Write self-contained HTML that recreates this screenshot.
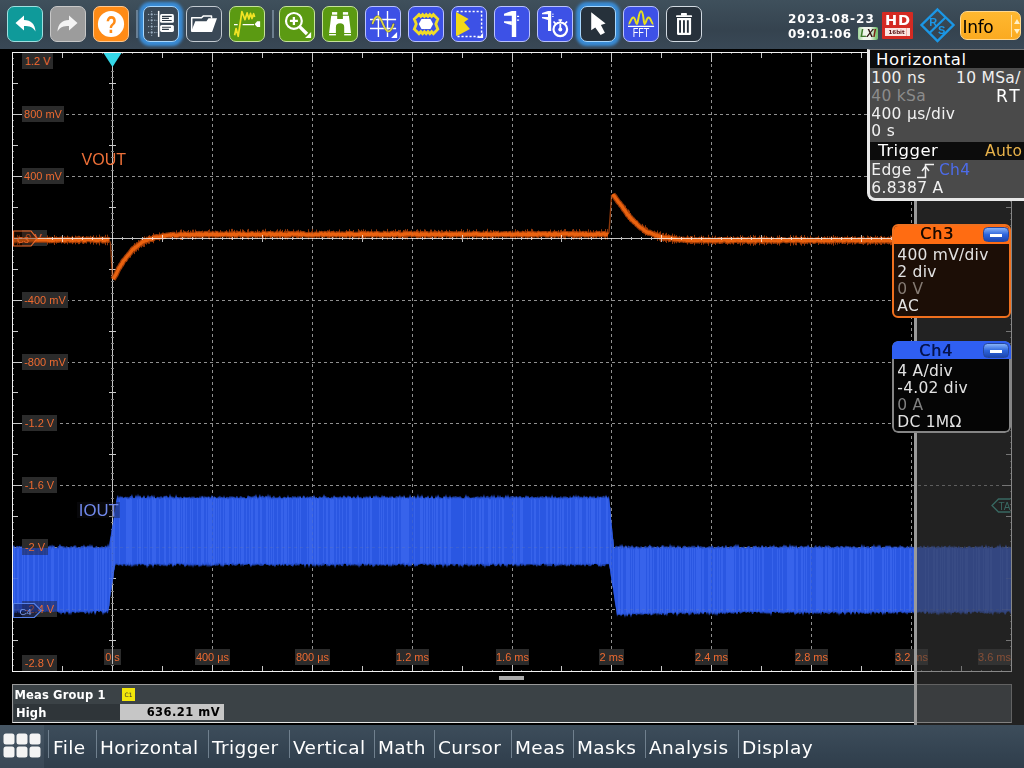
<!DOCTYPE html>
<html lang="en"><head><meta charset="utf-8"><title>RTO Oscilloscope</title>
<style>
*{margin:0;padding:0;box-sizing:border-box}
html,body{width:1024px;height:768px;overflow:hidden;background:#000}
body{position:relative;font-family:"DejaVu Sans","Liberation Sans",sans-serif;color:#fff}
.abs{position:absolute}
#toolbar{position:absolute;left:0;top:0;width:1024px;height:49px;background:linear-gradient(#3f505c,#35434f 62%,#394856)}
.tb{position:absolute;top:6px;width:36px;height:36px;border-radius:7px;border:1px solid #d2dae2;overflow:hidden}
.tb svg{position:absolute;left:-1px;top:-1px;width:36px;height:36px}
.teal{background:#0f9a9a;border-color:#9fe0e0}
.gray{background:#9c9c9c;border-color:#c8c8c8}
.orange{background:#ff8b16;border-color:#ffc890}
.dark{background:#3a4856;border-color:#c3cad1}
.green{background:#5b9a12;border-color:#c6e39a}
.blue{background:#3d51e6;border-color:#b9c2ff}
.sel{box-shadow:0 0 3px 4px #3a8cd6;border-color:#a8d8ff}
.tsep{position:absolute;top:10px;width:2px;height:28px;background:#6d7f8f}
#menubar{position:absolute;left:0;top:725px;width:1024px;height:43px;background:linear-gradient(#3d4d5b,#334250 70%,#303e4b)}
#menubar .mi{position:absolute;top:8.500px;font-size:18.5px;line-height:28px;color:#fff;white-space:nowrap;letter-spacing:.4px}
#menubar .ms{position:absolute;top:5px;width:1px;height:28px;background:#70808e}
.lab{position:absolute;height:16px;background:#2b2b2b;color:#ee6a30;font-family:"Liberation Sans",sans-serif;font-size:11px;line-height:16px;text-align:center;white-space:nowrap}

</style></head><body>
<div id="toolbar">
<div class="tb teal" style="left:7px"><svg viewBox="0 0 36 36"><path d="M8.5,17 L17,9.5 V14 C24,14 28,18 28.5,25.5 C26,21 22.5,20 17,20 V24.5 Z" fill="#fff"/></svg></div>
<div class="tb gray" style="left:50px"><svg viewBox="0 0 36 36"><path d="M27.5,17 L19,9.5 V14 C12,14 8,18 7.5,25.5 C10,21 13.5,20 19,20 V24.5 Z" fill="#f4f4f4"/></svg></div>
<div class="tb orange" style="left:93px"><svg viewBox="0 0 36 36"><circle cx="18" cy="18" r="13.1" fill="#fff"/><text transform="translate(18.3,26.8) scale(.74,1)" text-anchor="middle" font-family="Liberation Sans" font-weight="bold" font-size="24.5" fill="#ff8b16">?</text></svg></div>
<div class="tsep" style="left:136px"></div>
<div class="tb dark sel" style="left:143px"><svg viewBox="0 0 36 36"><g fill="#9db0c2"><circle cx="5.6" cy="8.4" r=".7"/><circle cx="8.7" cy="8.4" r="1.15"/><circle cx="11.8" cy="8.4" r=".7"/><circle cx="13.9" cy="8.4" r=".5"/><circle cx="5.6" cy="14.3" r=".7"/><circle cx="8.7" cy="14.3" r="1.15"/><circle cx="11.8" cy="14.3" r=".7"/><circle cx="13.9" cy="14.3" r=".5"/><circle cx="5.6" cy="20.6" r=".7"/><circle cx="8.7" cy="20.6" r="1.15"/><circle cx="11.8" cy="20.6" r=".7"/><circle cx="13.9" cy="20.6" r=".5"/><circle cx="5.6" cy="26.5" r=".7"/><circle cx="8.7" cy="26.5" r="1.15"/><circle cx="11.8" cy="26.5" r=".7"/><circle cx="13.9" cy="26.5" r=".5"/><circle cx="8.7" cy="11.4" r=".6"/><circle cx="8.7" cy="17.4" r=".6"/><circle cx="8.7" cy="23.5" r=".6"/><circle cx="8.7" cy="29.3" r=".6"/><circle cx="8.7" cy="5.6" r=".6"/></g><rect x="14.9" y="4.9" width="1.5" height="26" fill="#fff"/><rect x="17.1" y="8.100" width="13.8" height="8.700" rx="1.6" fill="#fff"/><rect x="17.1" y="19" width="13.8" height="6.900" rx="1.6" fill="#fff"/><path d="M19,10.400 H28.700 M19,12.400 H25.900 M19,14.500 H28.700 M19,21.300 H28 M19,23.400 H25.900" stroke="#2c3844" stroke-width="1.1"/></svg></div>
<div class="tb dark" style="left:186px"><svg viewBox="0 0 36 36"><path d="M5.700,25 V11.700 H15.500 L17.500,9.900 H25.500 V12.500" fill="none" stroke="#fff" stroke-width="1.5" stroke-linejoin="round"/><path d="M5,25.900 L9.300,15.200 H20.500 L22.500,12.300 H31 L26.100,25.900 Z" fill="#fff"/></svg></div>
<div class="tb green" style="left:229px"><svg viewBox="0 0 36 36"><path d="M5,18.600 H8.700 M13.600,18.600 H25" stroke="#fff" stroke-width="1.2"/><path d="M25.600,18.300 L28.100,15.200 H31.100 V20.900 H28.100 Z" fill="#fff"/><path d="M5.600,29.300 L7.100,22.500 L9.200,30.300 L12.900,5.500 L16,13.600 L18.100,6.900 L19.900,13.100 L21.500,7.400 L23,12.600 L24.600,7.700 L25.600,11" stroke="#f1e324" stroke-width="1.7" fill="none" stroke-linejoin="round"/></svg></div>
<div class="tsep" style="left:272px"></div>
<div class="tb green" style="left:279px"><svg viewBox="0 0 36 36"><circle cx="14.900" cy="14.900" r="7.900" fill="none" stroke="#fff" stroke-width="2.2"/><path d="M10.900,14.900 h8 M14.900,10.900 v8" stroke="#fff" stroke-width="2.3"/><path d="M20.600,20.600 L28,28" stroke="#fff" stroke-width="3.4"/><path d="M32.100,32.100 L26.100,31.900 L32.100,25.900 Z" fill="#fff"/></svg></div>
<div class="tb green" style="left:322px"><svg viewBox="0 0 36 36"><rect x="10" y="6.100" width="5.200" height="2.600" fill="#fff"/><rect x="20.900" y="6.100" width="5.200" height="2.600" fill="#fff"/><path d="M9.200,9.700 H15.200 V12.900 H20.900 V9.700 H26.900 L29,26.900 H22.200 V21 Q22.200,17.300 18.050,17.300 Q13.900,17.300 13.900,21 V26.900 H7.100 Z" fill="#fff"/><rect x="7.100" y="28" width="6.800" height="1.400" fill="#fff"/><rect x="22.200" y="28" width="6.800" height="1.400" fill="#fff"/></svg></div>
<div class="tb blue" style="left:365px"><svg viewBox="0 0 36 36"><path d="M13.400,5 V31.100 M22.500,5 V31.100 M5,13.500 H31.100 M5,22.500 H31.100" stroke="#fff" stroke-width="1.4"/><path d="M7.700,17.300 C9.500,12 11,10.500 12.600,10.500 C15,10.500 16.500,14.500 18.100,18.300 C19.800,22.500 21.500,25.400 23.500,25.400 C25.500,25.400 27.300,22 28.500,18.300" stroke="#4a4a20" stroke-width="2.8" fill="none" stroke-linecap="round" opacity=".5"/><path d="M7.700,17.300 C9.500,12 11,10.500 12.600,10.500 C15,10.500 16.500,14.500 18.100,18.300 C19.800,22.500 21.500,25.400 23.500,25.400 C25.500,25.400 27.300,22 28.500,18.300" stroke="#dcd444" stroke-width="1.8" fill="none" stroke-linecap="round"/><path d="M32.100,26.100 V31.900 H26.100 Z" fill="#fff"/></svg></div>
<div class="tb blue" style="left:408px"><svg viewBox="0 0 36 36"><path d="M9.500,10 L11,8.500 L12.800,10.500 L14.600,8.500 L16.400,10.500 L18.200,8.500 L20,10.500 L21.800,8.500 L23.600,10.500 L25.400,8.500 L26.800,10 L29.800,13 L27.800,18.100 L29.800,23.200 L26.800,26.200 L25.400,27.700 L23.600,25.700 L21.800,27.700 L20,25.700 L18.200,27.700 L16.400,25.700 L14.600,27.700 L12.800,25.700 L11,27.700 L9.500,26.200 L6.300,23.200 L8.300,18.100 L6.300,13 Z" fill="none" stroke="#f0dc28" stroke-width="2.800" stroke-linejoin="miter"/><path d="M10.800,18.100 L13.500,13.100 H22.400 L25.100,18.100 L22.400,23 H13.500 Z" fill="#fff"/></svg></div>
<div class="tb blue" style="left:451px"><svg viewBox="0 0 36 36"><path d="M5,6.100 L17.600,13.100 L13.100,16.250 L18.900,23 L6.400,29.800 H5 Z" fill="#f2d818"/><path d="M5.600,5.600 H30.600 V30.600 H5.600" fill="none" stroke="#fff" stroke-width="1.5" stroke-dasharray="2.1 1.9"/><path d="M32.100,26.100 V31.900 H25.100 Q31,31 32.100,26.100 Z" fill="#fff"/></svg></div>
<div class="tb blue" style="left:494px"><svg viewBox="0 0 36 36"><path d="M10,7.700 L17.800,5 H22.200 V31.100 H17.800 V9.700 H10 Z" fill="#fff"/><path d="M10,15.200 H17.800 V19.200 L10,16.800 Z" fill="#fff"/><path d="M23,10.300 h2.100 M23,14.200 h2.100" stroke="#fff" stroke-width="1.2"/></svg></div>
<div class="tb blue" style="left:537px"><svg viewBox="0 0 36 36"><path d="M5,6.900 L11,5 H14.200 V25.100 H11 V8.200 H5 Z" fill="#fff"/><path d="M5,11 H11 V13.900 L5,12.200 Z" fill="#fff"/><path d="M15.200,8.200 h1.400 M15.200,10.500 h1.400" stroke="#fff" stroke-width="1"/><circle cx="23.300" cy="23.300" r="6.800" fill="none" stroke="#fff" stroke-width="2.200"/><path d="M23.300,18.100 V23" stroke="#fff" stroke-width="1.800"/><circle cx="23.300" cy="23.600" r="2" fill="#fff"/><path d="M21.500,13.900 h3.600 M23.300,13.900 v2.500" stroke="#fff" stroke-width="1.500"/><path d="M16.500,15.500 l2.300,2.300 M30.100,15.500 l-2.300,2.300" stroke="#fff" stroke-width="1.700"/></svg></div>
<div class="tb sel" style="left:580px;background:#26313b"><svg viewBox="0 0 36 36"><path d="M11.200,6.200 V24.300 L15.250,21.500 L20.600,29 L24.900,26.800 L20.900,19 L25.600,17.400 Z" fill="#fff"/></svg></div>
<div class="tb blue" style="left:623px"><svg viewBox="0 0 36 36"><path d="M5.600,18.100 C7,18.100 8,11.600 10.300,11.600 C12.500,11.600 12.800,18.100 13.900,18.100 C15.200,18.100 15.500,5.300 18.100,5.300 C20.700,5.300 20.500,18.100 21.700,18.100 C23,18.100 23.300,11.600 25.600,11.600 C27.800,11.600 28.800,18.100 30.300,18.100" stroke="#e8e020" stroke-width="2" fill="none"/><path d="M5,20.400 H31.100" stroke="#fff" stroke-width="1.3"/><text x="9.700" y="30.800" font-family="Liberation Sans" font-size="12" fill="#fff" textLength="16.700" lengthAdjust="spacingAndGlyphs">FFT</text></svg></div>
<div class="tb" style="left:666px;background:#27313b"><svg viewBox="0 0 36 36"><rect x="15" y="7.100" width="5.900" height="2.600" rx=".6" fill="#fff"/><rect x="10" y="9.200" width="16.100" height="1.900" rx=".9" fill="#fff"/><path d="M11,12.100 H25.100 V27.500 Q25.100,29 23.600,29 H12.500 Q11,29 11,27.500 Z" fill="#fff"/><path d="M14.050,14.200 V26.700 M17.950,14.200 V26.700 M21.850,14.200 V26.700" stroke="#27313b" stroke-width="1.900"/></svg></div>
<div class="abs" style="left:788px;top:11.500px;font-size:12px;font-weight:bold;line-height:15px;letter-spacing:1px;color:#fff;white-space:nowrap">2023-08-23</div>
<div class="abs" style="left:788px;top:27px;font-size:12px;font-weight:bold;line-height:15px;letter-spacing:.5px;color:#fff;white-space:nowrap">09:01:06</div>
<div class="abs" style="left:858px;top:27px;width:20px;height:13px;background:linear-gradient(90deg,#9ed49a,#eef6ea 28%,#f2f4ee 62%,#7cc474 92%);border-radius:2px;overflow:hidden;font-family:'Liberation Sans',sans-serif;font-size:10.500px;font-style:italic;font-weight:bold;line-height:13px;text-align:center;letter-spacing:-.3px"><span style="color:#3e7a2a">L</span><span style="color:#2a1410">X</span><span style="color:#7a2414">I</span></div>
<div class="abs" style="left:882px;top:12px;width:31px;height:27px;background:#d42a22;border-radius:1px"><div class="abs" style="left:0;top:.800px;width:31px;text-align:center;font-weight:bold;font-size:14.500px;line-height:15px;color:#fff;letter-spacing:.8px;text-indent:.8px">HD</div><div class="abs" style="left:3px;top:15.700px;width:25px;height:8px;background:#fbe6e2;font-size:5.500px;line-height:8px;color:#5a1010;font-weight:bold;text-align:left;padding-left:3.500px;letter-spacing:0">16bit</div><div class="abs" style="left:24px;top:15.700px;width:1px;height:8px;background:#f0b0a8"></div></div>
<svg class="abs" style="left:919px;top:7px" width="37" height="37" viewBox="0 0 37 37"><path d="M18.500,2.500 L34.500,18 L18.500,34 L2.500,18 Z" fill="none" stroke="#1b97e6" stroke-width="2.400"/><path d="M26.500,10.500 L10.500,26" stroke="#1b97e6" stroke-width="2.200" fill="none"/><text x="14.300" y="18.600" font-family="Liberation Sans" font-weight="bold" font-size="11" fill="#1b97e6" text-anchor="middle">R</text><text x="22.600" y="27" font-family="Liberation Sans" font-weight="bold" font-size="11" fill="#1b97e6" text-anchor="middle">S</text></svg>
<div class="abs" style="left:960px;top:11px;width:61px;height:29px;border-radius:7px;background:linear-gradient(#ffb830,#fbaa20);border:1px solid #ffd890"><div class="abs" style="left:1.500px;top:.800px;font-size:17px;line-height:28px;color:#000;letter-spacing:-.3px">Info</div><div class="abs" style="left:50px;top:3px;width:1px;height:22px;background:#ffe0a0"></div><svg class="abs" style="left:52px;top:6px" width="8" height="17" viewBox="0 0 8 17"><path d="M4,1 L7,6 H1 Z M4,16 L7,11 H1 Z" fill="#fff0c8"/></svg></div>
</div>


<svg class="abs" style="left:0;top:0" width="1024" height="768" viewBox="0 0 1024 768">
<defs><pattern id="st" width="2.3" height="8" patternUnits="userSpaceOnUse"><rect x="0" y="0" width="1" height="8" fill="#4f7cff"/></pattern></defs>
<g opacity="1" shape-rendering="crispEdges" fill="none"><path d="M212.5,52 V671 M312.5,52 V671 M412.5,52 V671 M512.5,52 V671 M611.5,52 V671 M711.5,52 V671 M811.5,52 V671 M911.5,52 V671 M12,114.5 H1011 M12,176.5 H1011 M12,300.5 H1011 M12,362.5 H1011 M12,423.5 H1011 M12,485.5 H1011 M12,547.5 H1011 M12,609.5 H1011" stroke="#909090" stroke-width="1" stroke-dasharray="3 3"/><path d="M112.5,53 V671" stroke="#c6c6c6" stroke-width="1"/><path d="M109,83.5 h7 M13,83.5 h5 M1006,83.5 h5 M13,114.5 h9 M1002,114.5 h9 M109,145.5 h7 M13,145.5 h5 M1006,145.5 h5 M13,176.5 h9 M1002,176.5 h9 M109,207.5 h7 M13,207.5 h5 M1006,207.5 h5 M13,238.5 h9 M1002,238.5 h9 M109,269.5 h7 M13,269.5 h5 M1006,269.5 h5 M13,300.5 h9 M1002,300.5 h9 M109,331.5 h7 M13,331.5 h5 M1006,331.5 h5 M13,362.5 h9 M1002,362.5 h9 M109,392.5 h7 M13,392.5 h5 M1006,392.5 h5 M13,423.5 h9 M1002,423.5 h9 M109,454.5 h7 M13,454.5 h5 M1006,454.5 h5 M13,485.5 h9 M1002,485.5 h9 M109,516.5 h7 M13,516.5 h5 M1006,516.5 h5 M13,547.5 h9 M1002,547.5 h9 M109,578.5 h7 M13,578.5 h5 M1006,578.5 h5 M13,609.5 h9 M1002,609.5 h9 M109,640.5 h7 M13,640.5 h5 M1006,640.5 h5 M62.5,666 v5 M62.5,53 v5 M112.5,53 v9 M112.5,662 v9 M162.5,666 v5 M162.5,53 v5 M212.5,53 v9 M212.5,662 v9 M262.5,666 v5 M262.5,53 v5 M312.5,53 v9 M312.5,662 v9 M362.5,666 v5 M362.5,53 v5 M412.5,53 v9 M412.5,662 v9 M462.5,666 v5 M462.5,53 v5 M512.5,53 v9 M512.5,662 v9 M561.5,666 v5 M561.5,53 v5 M611.5,53 v9 M611.5,662 v9 M661.5,666 v5 M661.5,53 v5 M711.5,53 v9 M711.5,662 v9 M761.5,666 v5 M761.5,53 v5 M811.5,53 v9 M811.5,662 v9 M861.5,666 v5 M861.5,53 v5 M911.5,53 v9 M911.5,662 v9 M961.5,666 v5 M961.5,53 v5" stroke="#c8c8c8" stroke-width="1"/><path d="M111,58.5 h3 M13,58.5 h1 M1010,58.5 h1 M111,64.5 h3 M13,64.5 h1 M1010,64.5 h1 M111,71.5 h3 M13,71.5 h1 M1010,71.5 h1 M111,77.5 h3 M13,77.5 h1 M1010,77.5 h1 M111,89.5 h3 M13,89.5 h1 M1010,89.5 h1 M111,95.5 h3 M13,95.5 h1 M1010,95.5 h1 M111,102.5 h3 M13,102.5 h1 M1010,102.5 h1 M111,108.5 h3 M13,108.5 h1 M1010,108.5 h1 M111,120.5 h3 M13,120.5 h1 M1010,120.5 h1 M111,126.5 h3 M13,126.5 h1 M1010,126.5 h1 M111,132.5 h3 M13,132.5 h1 M1010,132.5 h1 M111,139.5 h3 M13,139.5 h1 M1010,139.5 h1 M111,151.5 h3 M13,151.5 h1 M1010,151.5 h1 M111,157.5 h3 M13,157.5 h1 M1010,157.5 h1 M111,163.5 h3 M13,163.5 h1 M1010,163.5 h1 M111,170.5 h3 M13,170.5 h1 M1010,170.5 h1 M111,182.5 h3 M13,182.5 h1 M1010,182.5 h1 M111,188.5 h3 M13,188.5 h1 M1010,188.5 h1 M111,194.5 h3 M13,194.5 h1 M1010,194.5 h1 M111,201.5 h3 M13,201.5 h1 M1010,201.5 h1 M111,213.5 h3 M13,213.5 h1 M1010,213.5 h1 M111,219.5 h3 M13,219.5 h1 M1010,219.5 h1 M111,225.5 h3 M13,225.5 h1 M1010,225.5 h1 M111,232.5 h3 M13,232.5 h1 M1010,232.5 h1 M111,244.5 h3 M13,244.5 h1 M1010,244.5 h1 M111,250.5 h3 M13,250.5 h1 M1010,250.5 h1 M111,256.5 h3 M13,256.5 h1 M1010,256.5 h1 M111,262.5 h3 M13,262.5 h1 M1010,262.5 h1 M111,275.5 h3 M13,275.5 h1 M1010,275.5 h1 M111,281.5 h3 M13,281.5 h1 M1010,281.5 h1 M111,287.5 h3 M13,287.5 h1 M1010,287.5 h1 M111,293.5 h3 M13,293.5 h1 M1010,293.5 h1 M111,306.5 h3 M13,306.5 h1 M1010,306.5 h1 M111,312.5 h3 M13,312.5 h1 M1010,312.5 h1 M111,318.5 h3 M13,318.5 h1 M1010,318.5 h1 M111,324.5 h3 M13,324.5 h1 M1010,324.5 h1 M111,337.5 h3 M13,337.5 h1 M1010,337.5 h1 M111,343.5 h3 M13,343.5 h1 M1010,343.5 h1 M111,349.5 h3 M13,349.5 h1 M1010,349.5 h1 M111,355.5 h3 M13,355.5 h1 M1010,355.5 h1 M111,368.5 h3 M13,368.5 h1 M1010,368.5 h1 M111,374.5 h3 M13,374.5 h1 M1010,374.5 h1 M111,380.5 h3 M13,380.5 h1 M1010,380.5 h1 M111,386.5 h3 M13,386.5 h1 M1010,386.5 h1 M111,399.5 h3 M13,399.5 h1 M1010,399.5 h1 M111,405.5 h3 M13,405.5 h1 M1010,405.5 h1 M111,411.5 h3 M13,411.5 h1 M1010,411.5 h1 M111,417.5 h3 M13,417.5 h1 M1010,417.5 h1 M111,430.5 h3 M13,430.5 h1 M1010,430.5 h1 M111,436.5 h3 M13,436.5 h1 M1010,436.5 h1 M111,442.5 h3 M13,442.5 h1 M1010,442.5 h1 M111,448.5 h3 M13,448.5 h1 M1010,448.5 h1 M111,461.5 h3 M13,461.5 h1 M1010,461.5 h1 M111,467.5 h3 M13,467.5 h1 M1010,467.5 h1 M111,473.5 h3 M13,473.5 h1 M1010,473.5 h1 M111,479.5 h3 M13,479.5 h1 M1010,479.5 h1 M111,491.5 h3 M13,491.5 h1 M1010,491.5 h1 M111,498.5 h3 M13,498.5 h1 M1010,498.5 h1 M111,504.5 h3 M13,504.5 h1 M1010,504.5 h1 M111,510.5 h3 M13,510.5 h1 M1010,510.5 h1 M111,522.5 h3 M13,522.5 h1 M1010,522.5 h1 M111,529.5 h3 M13,529.5 h1 M1010,529.5 h1 M111,535.5 h3 M13,535.5 h1 M1010,535.5 h1 M111,541.5 h3 M13,541.5 h1 M1010,541.5 h1 M111,553.5 h3 M13,553.5 h1 M1010,553.5 h1 M111,560.5 h3 M13,560.5 h1 M1010,560.5 h1 M111,566.5 h3 M13,566.5 h1 M1010,566.5 h1 M111,572.5 h3 M13,572.5 h1 M1010,572.5 h1 M111,584.5 h3 M13,584.5 h1 M1010,584.5 h1 M111,591.5 h3 M13,591.5 h1 M1010,591.5 h1 M111,597.5 h3 M13,597.5 h1 M1010,597.5 h1 M111,603.5 h3 M13,603.5 h1 M1010,603.5 h1 M111,615.5 h3 M13,615.5 h1 M1010,615.5 h1 M111,621.5 h3 M13,621.5 h1 M1010,621.5 h1 M111,628.5 h3 M13,628.5 h1 M1010,628.5 h1 M111,634.5 h3 M13,634.5 h1 M1010,634.5 h1 M111,646.5 h3 M13,646.5 h1 M1010,646.5 h1 M111,652.5 h3 M13,652.5 h1 M1010,652.5 h1 M111,659.5 h3 M13,659.5 h1 M1010,659.5 h1 M111,665.5 h3 M13,665.5 h1 M1010,665.5 h1 M22.5,670 v1 M22.5,53 v1 M32.5,670 v1 M32.5,53 v1 M42.5,670 v1 M42.5,53 v1 M52.5,670 v1 M52.5,53 v1 M72.5,670 v1 M72.5,53 v1 M82.5,670 v1 M82.5,53 v1 M92.5,670 v1 M92.5,53 v1 M102.5,670 v1 M102.5,53 v1 M122.5,670 v1 M122.5,53 v1 M132.5,670 v1 M132.5,53 v1 M142.5,670 v1 M142.5,53 v1 M152.5,670 v1 M152.5,53 v1 M172.5,670 v1 M172.5,53 v1 M182.5,670 v1 M182.5,53 v1 M192.5,670 v1 M192.5,53 v1 M202.5,670 v1 M202.5,53 v1 M222.5,670 v1 M222.5,53 v1 M232.5,670 v1 M232.5,53 v1 M242.5,670 v1 M242.5,53 v1 M252.5,670 v1 M252.5,53 v1 M272.5,670 v1 M272.5,53 v1 M282.5,670 v1 M282.5,53 v1 M292.5,670 v1 M292.5,53 v1 M302.5,670 v1 M302.5,53 v1 M322.5,670 v1 M322.5,53 v1 M332.5,670 v1 M332.5,53 v1 M342.5,670 v1 M342.5,53 v1 M352.5,670 v1 M352.5,53 v1 M372.5,670 v1 M372.5,53 v1 M382.5,670 v1 M382.5,53 v1 M392.5,670 v1 M392.5,53 v1 M402.5,670 v1 M402.5,53 v1 M422.5,670 v1 M422.5,53 v1 M432.5,670 v1 M432.5,53 v1 M442.5,670 v1 M442.5,53 v1 M452.5,670 v1 M452.5,53 v1 M472.5,670 v1 M472.5,53 v1 M482.5,670 v1 M482.5,53 v1 M492.5,670 v1 M492.5,53 v1 M502.5,670 v1 M502.5,53 v1 M521.5,670 v1 M521.5,53 v1 M531.5,670 v1 M531.5,53 v1 M541.5,670 v1 M541.5,53 v1 M551.5,670 v1 M551.5,53 v1 M571.5,670 v1 M571.5,53 v1 M581.5,670 v1 M581.5,53 v1 M591.5,670 v1 M591.5,53 v1 M601.5,670 v1 M601.5,53 v1 M621.5,670 v1 M621.5,53 v1 M631.5,670 v1 M631.5,53 v1 M641.5,670 v1 M641.5,53 v1 M651.5,670 v1 M651.5,53 v1 M671.5,670 v1 M671.5,53 v1 M681.5,670 v1 M681.5,53 v1 M691.5,670 v1 M691.5,53 v1 M701.5,670 v1 M701.5,53 v1 M721.5,670 v1 M721.5,53 v1 M731.5,670 v1 M731.5,53 v1 M741.5,670 v1 M741.5,53 v1 M751.5,670 v1 M751.5,53 v1 M771.5,670 v1 M771.5,53 v1 M781.5,670 v1 M781.5,53 v1 M791.5,670 v1 M791.5,53 v1 M801.5,670 v1 M801.5,53 v1 M821.5,670 v1 M821.5,53 v1 M831.5,670 v1 M831.5,53 v1 M841.5,670 v1 M841.5,53 v1 M851.5,670 v1 M851.5,53 v1 M871.5,670 v1 M871.5,53 v1 M881.5,670 v1 M881.5,53 v1 M891.5,670 v1 M891.5,53 v1 M901.5,670 v1 M901.5,53 v1 M921.5,670 v1 M921.5,53 v1 M931.5,670 v1 M931.5,53 v1 M941.5,670 v1 M941.5,53 v1 M951.5,670 v1 M951.5,53 v1 M971.5,670 v1 M971.5,53 v1 M981.5,670 v1 M981.5,53 v1 M991.5,670 v1 M991.5,53 v1 M1001.5,670 v1 M1001.5,53 v1" stroke="#808080" stroke-width="1"/></g>
<path d="M13,546.3 L14,544.8 L15,548.3 L16,546.8 L17,545.8 L18,546.3 L19,546.3 L20,545.8 L21,548.3 L22,545.3 L23,546.8 L24,546.3 L25,547.3 L26,544.3 L27,548.3 L28,545.3 L29,546.8 L30,547.8 L31,548.3 L32,546.3 L33,547.8 L34,546.3 L35,546.8 L36,547.8 L37,547.8 L38,543.8 L39,547.3 L40,544.8 L41,547.8 L42,545.3 L43,546.8 L44,543.3 L45,546.8 L46,545.3 L47,548.3 L48,545.8 L49,547.3 L50,544.8 L51,546.8 L52,544.3 L53,546.3 L54,545.3 L55,548.3 L56,547.8 L57,547.8 L58,546.3 L59,545.8 L60,543.8 L61,546.3 L62,545.8 L63,546.8 L64,545.8 L65,547.8 L66,546.3 L67,546.3 L68,547.3 L69,547.3 L70,546.8 L71,546.3 L72,546.3 L73,547.3 L74,545.3 L75,545.8 L76,545.3 L77,548.3 L78,546.8 L79,547.3 L80,547.3 L81,546.3 L82,545.8 L83,546.3 L84,544.3 L85,546.8 L86,546.3 L87,546.8 L88,545.3 L89,546.8 L90,543.8 L91,546.8 L92,544.3 L93,547.8 L94,547.3 L95,547.8 L96,545.8 L97,546.3 L98,547.8 L99,547.3 L100,547.3 L101,546.8 L102,546.3 L103,546.8 L104,547.3 L105,546.3 L106,545.3 L107,547.3 L108,543.3 L109,546.3 L110,538.6 L111,533.8 L112,527.1 L113,523.4 L114,514.2 L115,510.9 L116,502.2 L117,496.5 L118,495.0 L119,498.5 L120,495.5 L121,497.5 L122,496.0 L123,498.0 L124,497.5 L125,497.0 L126,496.5 L127,497.5 L128,496.5 L129,498.0 L130,496.0 L131,496.0 L132,494.0 L133,497.5 L134,498.0 L135,497.5 L136,494.5 L137,497.0 L138,493.5 L139,497.0 L140,495.0 L141,498.0 L142,497.0 L143,497.5 L144,495.0 L145,498.0 L146,498.0 L147,497.0 L148,494.5 L149,497.0 L150,496.0 L151,496.5 L152,494.5 L153,498.0 L154,494.5 L155,498.0 L156,498.0 L157,497.0 L158,496.5 L159,497.5 L160,496.5 L161,496.5 L162,496.5 L163,498.5 L164,495.5 L165,496.5 L166,495.5 L167,496.0 L168,497.0 L169,497.5 L170,493.5 L171,497.0 L172,496.0 L173,497.5 L174,496.5 L175,498.5 L176,494.0 L177,497.0 L178,497.0 L179,497.5 L180,497.0 L181,496.5 L182,498.0 L183,498.0 L184,496.0 L185,497.5 L186,497.5 L187,497.5 L188,497.5 L189,497.0 L190,496.5 L191,498.0 L192,496.0 L193,497.5 L194,496.0 L195,498.0 L196,497.5 L197,497.5 L198,497.5 L199,498.0 L200,495.5 L201,498.5 L202,495.5 L203,498.0 L204,495.5 L205,497.5 L206,496.0 L207,498.5 L208,496.0 L209,497.0 L210,496.5 L211,498.0 L212,494.5 L213,498.5 L214,496.0 L215,497.0 L216,497.0 L217,498.5 L218,496.5 L219,497.0 L220,495.5 L221,497.5 L222,496.5 L223,498.5 L224,495.0 L225,498.5 L226,497.5 L227,496.5 L228,497.5 L229,497.0 L230,496.0 L231,497.0 L232,496.0 L233,497.0 L234,496.5 L235,498.5 L236,496.5 L237,496.0 L238,497.0 L239,498.5 L240,496.0 L241,496.5 L242,496.5 L243,498.0 L244,497.0 L245,498.5 L246,498.0 L247,498.0 L248,495.0 L249,496.5 L250,496.0 L251,497.5 L252,496.0 L253,497.0 L254,495.5 L255,496.0 L256,494.0 L257,496.5 L258,498.0 L259,496.0 L260,494.0 L261,497.5 L262,495.5 L263,496.0 L264,496.5 L265,497.0 L266,495.5 L267,497.5 L268,493.5 L269,497.0 L270,494.5 L271,497.5 L272,497.5 L273,496.5 L274,495.5 L275,497.5 L276,497.5 L277,497.5 L278,497.5 L279,496.5 L280,495.5 L281,498.5 L282,497.5 L283,498.0 L284,496.5 L285,497.0 L286,497.5 L287,498.0 L288,494.5 L289,498.0 L290,497.0 L291,498.0 L292,496.5 L293,496.0 L294,497.0 L295,496.0 L296,497.0 L297,497.5 L298,495.5 L299,497.5 L300,495.5 L301,497.5 L302,498.0 L303,496.0 L304,495.5 L305,497.5 L306,497.5 L307,496.5 L308,496.5 L309,497.5 L310,496.0 L311,497.0 L312,496.0 L313,497.5 L314,494.5 L315,498.5 L316,497.0 L317,498.0 L318,498.0 L319,497.0 L320,496.0 L321,498.0 L322,497.0 L323,496.5 L324,494.0 L325,496.5 L326,496.0 L327,498.0 L328,497.0 L329,497.5 L330,498.0 L331,497.5 L332,496.5 L333,498.0 L334,495.0 L335,497.0 L336,496.5 L337,497.5 L338,496.5 L339,497.5 L340,496.0 L341,497.0 L342,497.5 L343,496.5 L344,495.0 L345,497.0 L346,496.5 L347,498.0 L348,495.0 L349,497.0 L350,496.0 L351,497.5 L352,498.0 L353,497.0 L354,496.0 L355,498.0 L356,497.5 L357,496.5 L358,494.5 L359,497.0 L360,497.5 L361,496.5 L362,498.5 L363,498.0 L364,496.0 L365,498.5 L366,495.5 L367,497.5 L368,496.0 L369,498.0 L370,495.0 L371,498.0 L372,498.0 L373,497.5 L374,495.5 L375,498.0 L376,494.5 L377,497.5 L378,495.5 L379,497.5 L380,497.0 L381,498.0 L382,494.5 L383,497.0 L384,495.5 L385,496.5 L386,497.0 L387,496.5 L388,497.0 L389,498.0 L390,495.5 L391,498.0 L392,495.5 L393,498.0 L394,497.5 L395,498.0 L396,496.0 L397,496.5 L398,496.5 L399,496.5 L400,494.5 L401,498.5 L402,496.0 L403,498.5 L404,494.5 L405,498.0 L406,497.5 L407,498.0 L408,496.5 L409,498.0 L410,494.0 L411,497.0 L412,497.0 L413,498.0 L414,495.5 L415,496.5 L416,498.0 L417,496.5 L418,493.5 L419,498.5 L420,495.5 L421,497.0 L422,494.0 L423,498.0 L424,497.5 L425,498.0 L426,496.5 L427,498.0 L428,495.0 L429,498.0 L430,498.0 L431,497.0 L432,495.0 L433,498.5 L434,498.5 L435,498.0 L436,495.0 L437,498.0 L438,494.0 L439,496.5 L440,497.5 L441,497.0 L442,498.5 L443,497.5 L444,496.0 L445,497.0 L446,494.0 L447,497.5 L448,496.5 L449,497.5 L450,495.0 L451,497.5 L452,497.0 L453,496.5 L454,496.5 L455,496.5 L456,496.0 L457,497.0 L458,496.5 L459,497.0 L460,496.0 L461,497.0 L462,498.0 L463,498.5 L464,498.0 L465,496.5 L466,494.0 L467,497.0 L468,495.5 L469,497.0 L470,497.5 L471,498.0 L472,497.5 L473,498.0 L474,496.5 L475,498.0 L476,496.5 L477,497.0 L478,496.0 L479,497.5 L480,496.5 L481,496.5 L482,496.5 L483,497.0 L484,494.0 L485,498.5 L486,496.0 L487,496.5 L488,495.5 L489,497.5 L490,496.5 L491,496.5 L492,494.5 L493,498.0 L494,494.0 L495,497.5 L496,497.5 L497,497.0 L498,494.5 L499,497.5 L500,495.0 L501,497.0 L502,497.0 L503,496.5 L504,498.0 L505,496.5 L506,494.5 L507,497.5 L508,494.0 L509,497.5 L510,496.5 L511,496.5 L512,496.0 L513,496.5 L514,496.0 L515,498.0 L516,496.0 L517,496.5 L518,497.0 L519,496.5 L520,496.0 L521,496.5 L522,497.5 L523,497.0 L524,497.0 L525,498.0 L526,495.0 L527,497.0 L528,495.5 L529,498.0 L530,497.0 L531,497.0 L532,496.0 L533,497.0 L534,497.5 L535,497.0 L536,497.0 L537,497.5 L538,496.0 L539,498.5 L540,496.0 L541,497.0 L542,496.0 L543,496.5 L544,497.0 L545,497.0 L546,495.5 L547,497.5 L548,496.0 L549,497.5 L550,496.0 L551,498.5 L552,494.0 L553,497.0 L554,497.5 L555,496.0 L556,497.0 L557,498.5 L558,497.0 L559,497.5 L560,497.0 L561,496.0 L562,498.0 L563,496.5 L564,496.5 L565,496.5 L566,496.5 L567,497.0 L568,497.0 L569,498.5 L570,495.5 L571,497.5 L572,497.5 L573,496.0 L574,495.0 L575,498.0 L576,494.0 L577,498.0 L578,495.0 L579,496.5 L580,496.5 L581,497.0 L582,496.5 L583,498.0 L584,495.0 L585,497.0 L586,496.5 L587,496.5 L588,497.0 L589,498.0 L590,495.5 L591,497.5 L592,496.0 L593,497.5 L594,495.5 L595,497.5 L596,498.0 L597,497.0 L598,495.5 L599,497.5 L600,496.5 L601,497.0 L602,496.5 L603,496.5 L604,495.5 L605,497.5 L606,494.5 L607,497.5 L608,497.0 L609,496.0 L610,505.5 L611,516.4 L612,526.9 L613,536.3 L614,547.3 L615,548.3 L616,545.3 L617,547.3 L618,545.8 L619,547.8 L620,544.3 L621,546.3 L622,543.8 L623,546.3 L624,546.8 L625,546.3 L626,545.3 L627,548.3 L628,545.3 L629,546.3 L630,546.3 L631,546.8 L632,544.8 L633,546.8 L634,546.8 L635,547.8 L636,546.3 L637,546.3 L638,546.8 L639,546.8 L640,547.8 L641,545.8 L642,547.3 L643,547.8 L644,546.8 L645,546.3 L646,545.8 L647,547.8 L648,546.3 L649,545.8 L650,544.3 L651,546.8 L652,545.8 L653,548.3 L654,546.3 L655,547.8 L656,547.3 L657,546.3 L658,546.3 L659,548.3 L660,546.3 L661,548.3 L662,544.8 L663,545.8 L664,545.3 L665,547.8 L666,545.8 L667,547.3 L668,545.8 L669,548.3 L670,543.3 L671,546.8 L672,544.8 L673,547.8 L674,544.8 L675,548.3 L676,546.8 L677,547.3 L678,544.8 L679,547.8 L680,545.3 L681,548.3 L682,547.8 L683,546.3 L684,545.8 L685,545.8 L686,546.3 L687,547.8 L688,546.3 L689,546.8 L690,546.3 L691,547.3 L692,545.3 L693,546.8 L694,545.3 L695,546.8 L696,546.8 L697,547.3 L698,544.3 L699,547.3 L700,545.8 L701,546.8 L702,546.3 L703,547.3 L704,546.3 L705,547.8 L706,547.3 L707,547.8 L708,546.8 L709,546.3 L710,546.3 L711,546.8 L712,545.3 L713,546.3 L714,547.8 L715,547.3 L716,546.8 L717,547.3 L718,545.8 L719,546.3 L720,547.3 L721,547.3 L722,546.3 L723,545.8 L724,548.3 L725,546.3 L726,544.8 L727,546.8 L728,547.8 L729,547.3 L730,546.3 L731,546.3 L732,546.3 L733,547.8 L734,545.3 L735,545.8 L736,543.8 L737,546.3 L738,543.8 L739,546.3 L740,547.8 L741,547.3 L742,546.8 L743,547.8 L744,545.8 L745,548.3 L746,547.8 L747,547.3 L748,546.3 L749,545.8 L750,546.8 L751,547.8 L752,547.8 L753,546.3 L754,545.8 L755,546.3 L756,545.3 L757,547.3 L758,546.8 L759,546.3 L760,547.3 L761,547.3 L762,544.8 L763,546.3 L764,547.3 L765,546.8 L766,545.8 L767,547.8 L768,546.8 L769,548.3 L770,544.8 L771,547.3 L772,545.8 L773,546.3 L774,544.3 L775,547.8 L776,546.3 L777,547.3 L778,547.3 L779,547.8 L780,545.8 L781,547.3 L782,546.3 L783,546.3 L784,544.3 L785,546.3 L786,544.8 L787,547.3 L788,546.3 L789,547.3 L790,543.3 L791,547.8 L792,544.8 L793,547.3 L794,544.8 L795,548.3 L796,544.8 L797,546.8 L798,547.8 L799,547.3 L800,546.3 L801,545.8 L802,545.8 L803,547.8 L804,545.8 L805,547.3 L806,545.8 L807,546.8 L808,544.3 L809,546.3 L810,547.3 L811,548.3 L812,546.3 L813,548.3 L814,546.8 L815,546.3 L816,544.8 L817,547.8 L818,546.3 L819,546.3 L820,545.3 L821,548.3 L822,545.8 L823,547.8 L824,546.8 L825,546.8 L826,544.8 L827,547.3 L828,544.8 L829,546.3 L830,545.8 L831,548.3 L832,546.8 L833,547.8 L834,546.8 L835,547.3 L836,546.3 L837,546.3 L838,545.8 L839,547.8 L840,546.3 L841,546.3 L842,545.8 L843,547.8 L844,546.3 L845,547.8 L846,545.3 L847,547.3 L848,545.8 L849,547.8 L850,545.8 L851,547.3 L852,546.8 L853,546.8 L854,545.8 L855,547.3 L856,546.8 L857,547.8 L858,547.3 L859,547.3 L860,547.8 L861,546.3 L862,543.8 L863,548.3 L864,544.3 L865,547.8 L866,546.8 L867,546.3 L868,546.3 L869,546.3 L870,548.3 L871,548.3 L872,545.8 L873,546.3 L874,543.8 L875,547.8 L876,545.3 L877,547.8 L878,544.3 L879,546.3 L880,544.3 L881,548.3 L882,546.8 L883,547.8 L884,546.3 L885,547.8 L886,545.3 L887,546.8 L888,545.3 L889,546.8 L890,544.8 L891,547.8 L892,546.3 L893,548.3 L894,546.3 L895,547.3 L896,546.3 L897,547.8 L898,546.3 L899,547.3 L900,544.8 L901,546.3 L902,546.3 L903,546.8 L904,546.8 L905,547.8 L906,547.3 L907,546.3 L908,545.8 L909,548.3 L910,545.3 L911,547.3 L912,546.3 L913,547.3 L914,546.8 L915,546.3 L916,545.3 L917,547.3 L918,547.3 L919,547.8 L920,545.8 L921,546.3 L922,546.8 L923,548.3 L924,545.3 L925,548.3 L926,547.3 L927,546.8 L928,545.3 L929,547.8 L930,546.3 L931,548.3 L932,545.3 L933,547.8 L934,545.3 L935,547.8 L936,546.8 L937,546.8 L938,545.8 L939,546.3 L940,547.3 L941,547.3 L942,545.3 L943,548.3 L944,546.3 L945,545.8 L946,546.3 L947,547.8 L948,546.3 L949,546.3 L950,544.8 L951,548.3 L952,545.8 L953,548.3 L954,545.3 L955,547.3 L956,546.3 L957,548.3 L958,546.8 L959,545.8 L960,547.8 L961,546.8 L962,547.3 L963,548.3 L964,546.8 L965,546.3 L966,547.8 L967,547.8 L968,546.3 L969,546.3 L970,545.8 L971,547.8 L972,547.3 L973,547.3 L974,547.8 L975,546.3 L976,545.8 L977,547.8 L978,545.8 L979,547.8 L980,545.8 L981,547.8 L982,544.8 L983,546.8 L984,547.8 L985,547.8 L986,543.8 L987,548.3 L988,545.8 L989,546.3 L990,546.8 L991,548.3 L992,545.3 L993,548.3 L994,547.8 L995,547.8 L996,546.8 L997,546.8 L998,545.3 L999,547.3 L1000,543.3 L1001,547.3 L1002,546.8 L1003,546.3 L1004,547.3 L1005,546.8 L1006,544.3 L1007,548.3 L1008,546.8 L1009,546.3 L1010,547.3 L1011,546.8 L1011,614.3 L1010,613.3 L1009,611.3 L1008,611.3 L1007,612.3 L1006,613.8 L1005,615.3 L1004,612.8 L1003,612.8 L1002,612.3 L1001,612.8 L1000,613.3 L999,614.3 L998,612.3 L997,614.3 L996,611.3 L995,613.3 L994,611.8 L993,615.8 L992,613.8 L991,613.3 L990,613.8 L989,613.8 L988,612.8 L987,614.3 L986,612.8 L985,613.8 L984,613.3 L983,613.3 L982,612.8 L981,612.8 L980,613.3 L979,611.3 L978,612.8 L977,613.3 L976,611.8 L975,612.3 L974,611.3 L973,613.3 L972,611.3 L971,614.3 L970,612.8 L969,611.8 L968,611.8 L967,615.3 L966,612.8 L965,614.8 L964,611.8 L963,613.8 L962,612.3 L961,615.3 L960,612.8 L959,613.8 L958,611.8 L957,613.3 L956,612.8 L955,612.3 L954,612.3 L953,613.3 L952,612.8 L951,615.8 L950,611.8 L949,614.8 L948,612.3 L947,614.3 L946,612.8 L945,613.3 L944,611.3 L943,615.3 L942,611.8 L941,614.8 L940,611.8 L939,615.8 L938,613.8 L937,615.3 L936,613.3 L935,612.8 L934,613.8 L933,613.3 L932,613.8 L931,614.3 L930,611.3 L929,614.8 L928,611.8 L927,612.3 L926,613.3 L925,614.3 L924,612.8 L923,612.3 L922,611.8 L921,613.8 L920,611.3 L919,612.8 L918,612.3 L917,613.3 L916,612.8 L915,613.8 L914,612.3 L913,613.8 L912,611.8 L911,612.8 L910,613.3 L909,612.8 L908,613.3 L907,614.8 L906,612.8 L905,613.8 L904,611.8 L903,613.8 L902,612.8 L901,612.8 L900,611.3 L899,612.8 L898,611.8 L897,615.3 L896,611.3 L895,613.3 L894,613.3 L893,613.8 L892,612.3 L891,614.3 L890,612.3 L889,614.3 L888,612.3 L887,612.3 L886,611.8 L885,615.3 L884,611.3 L883,615.8 L882,613.8 L881,612.3 L880,611.8 L879,614.3 L878,612.8 L877,612.8 L876,612.3 L875,614.8 L874,611.8 L873,612.8 L872,611.8 L871,615.8 L870,612.8 L869,613.8 L868,613.8 L867,613.8 L866,613.3 L865,614.3 L864,613.3 L863,613.3 L862,613.8 L861,612.8 L860,612.8 L859,614.8 L858,613.3 L857,612.3 L856,611.3 L855,615.3 L854,612.3 L853,612.8 L852,611.8 L851,615.4 L850,612.9 L849,612.4 L848,611.9 L847,613.4 L846,612.9 L845,615.4 L844,613.4 L843,612.4 L842,611.4 L841,614.4 L840,612.9 L839,615.9 L838,612.4 L837,614.4 L836,611.9 L835,612.4 L834,613.4 L833,612.9 L832,611.4 L831,612.9 L830,613.4 L829,614.4 L828,613.4 L827,613.4 L826,612.9 L825,612.9 L824,613.9 L823,611.9 L822,611.4 L821,615.4 L820,612.4 L819,613.9 L818,612.9 L817,613.9 L816,612.9 L815,613.9 L814,611.9 L813,614.9 L812,611.4 L811,612.9 L810,612.9 L809,614.9 L808,612.4 L807,612.9 L806,613.4 L805,612.9 L804,611.9 L803,615.9 L802,611.9 L801,613.9 L800,613.4 L799,614.4 L798,611.4 L797,613.9 L796,613.4 L795,615.4 L794,612.9 L793,611.9 L792,612.9 L791,612.4 L790,612.4 L789,613.9 L788,611.4 L787,612.9 L786,611.9 L785,613.5 L784,613.0 L783,614.0 L782,612.5 L781,614.0 L780,612.0 L779,613.5 L778,612.5 L777,611.5 L776,613.0 L775,613.0 L774,612.0 L773,612.0 L772,612.0 L771,616.5 L770,612.5 L769,614.5 L768,612.5 L767,614.5 L766,612.5 L765,614.0 L764,612.0 L763,614.0 L762,612.5 L761,614.0 L760,612.5 L759,612.5 L758,611.5 L757,613.5 L756,611.5 L755,612.1 L754,612.1 L753,614.1 L752,614.1 L751,611.6 L750,612.6 L749,613.1 L748,611.6 L747,612.6 L746,613.1 L745,612.1 L744,611.6 L743,612.6 L742,612.6 L741,613.6 L740,613.6 L739,612.1 L738,612.1 L737,614.6 L736,612.6 L735,612.6 L734,613.7 L733,613.7 L732,613.2 L731,613.7 L730,612.2 L729,612.7 L728,612.7 L727,614.2 L726,611.7 L725,614.7 L724,612.7 L723,614.2 L722,613.7 L721,612.2 L720,613.7 L719,613.8 L718,613.3 L717,616.3 L716,613.3 L715,615.8 L714,611.8 L713,615.3 L712,613.8 L711,613.3 L710,614.3 L709,615.8 L708,611.8 L707,614.9 L706,612.4 L705,611.9 L704,612.9 L703,614.4 L702,612.4 L701,613.9 L700,611.9 L699,614.9 L698,612.4 L697,615.0 L696,613.5 L695,614.5 L694,614.5 L693,612.5 L692,612.5 L691,615.0 L690,614.0 L689,616.1 L688,612.6 L687,613.6 L686,612.1 L685,615.1 L684,613.1 L683,614.6 L682,613.6 L681,613.2 L680,612.7 L679,614.2 L678,614.2 L677,616.7 L676,612.7 L675,612.3 L674,614.3 L673,614.8 L672,612.8 L671,613.3 L670,612.8 L669,613.4 L668,612.4 L667,616.4 L666,613.9 L665,615.4 L664,614.9 L663,613.0 L662,615.0 L661,615.0 L660,613.5 L659,615.5 L658,612.6 L657,616.1 L656,612.6 L655,614.6 L654,613.6 L653,615.2 L652,614.2 L651,615.7 L650,612.7 L649,614.8 L648,614.8 L647,614.3 L646,613.8 L645,614.4 L644,613.4 L643,615.4 L642,613.9 L641,615.5 L640,613.5 L639,615.0 L638,613.6 L637,615.6 L636,615.1 L635,613.7 L634,614.2 L633,614.2 L632,614.2 L631,617.8 L630,614.8 L629,614.3 L628,614.9 L627,616.9 L626,613.5 L625,618.0 L624,614.5 L623,614.6 L622,615.1 L621,616.6 L620,614.7 L619,615.2 L618,614.8 L617,616.8 L616,609.0 L615,603.7 L614,595.9 L613,588.6 L612,584.4 L611,577.6 L610,569.8 L609,564.5 L608,563.5 L607,564.5 L606,564.0 L605,566.5 L604,566.0 L603,566.0 L602,565.5 L601,567.5 L600,565.5 L599,567.0 L598,565.5 L597,564.5 L596,563.5 L595,564.0 L594,564.0 L593,565.0 L592,564.0 L591,566.5 L590,565.5 L589,566.5 L588,565.0 L587,565.0 L586,564.5 L585,567.0 L584,564.5 L583,565.5 L582,564.5 L581,566.0 L580,563.5 L579,566.0 L578,563.5 L577,565.5 L576,564.5 L575,567.0 L574,565.5 L573,565.0 L572,565.5 L571,564.0 L570,565.5 L569,566.5 L568,563.5 L567,567.0 L566,565.0 L565,566.0 L564,564.5 L563,565.5 L562,564.0 L561,566.5 L560,564.0 L559,566.5 L558,565.0 L557,566.5 L556,565.5 L555,567.5 L554,564.0 L553,563.5 L552,566.0 L551,566.5 L550,565.5 L549,566.5 L548,565.5 L547,567.0 L546,563.5 L545,566.5 L544,563.5 L543,563.5 L542,564.0 L541,566.0 L540,565.5 L539,566.0 L538,564.5 L537,567.0 L536,565.5 L535,565.0 L534,565.5 L533,565.5 L532,564.0 L531,565.0 L530,563.5 L529,566.0 L528,563.5 L527,566.0 L526,564.0 L525,566.5 L524,564.5 L523,565.5 L522,565.5 L521,566.0 L520,563.5 L519,567.0 L518,564.5 L517,567.5 L516,563.5 L515,566.0 L514,564.0 L513,566.5 L512,564.0 L511,564.5 L510,564.5 L509,564.5 L508,564.0 L507,568.0 L506,565.0 L505,566.5 L504,564.0 L503,564.5 L502,563.5 L501,567.0 L500,566.0 L499,565.0 L498,563.5 L497,566.0 L496,566.0 L495,566.5 L494,565.0 L493,564.0 L492,565.0 L491,565.0 L490,565.5 L489,566.5 L488,565.5 L487,566.5 L486,565.0 L485,568.5 L484,565.5 L483,566.5 L482,565.0 L481,564.5 L480,564.0 L479,567.0 L478,563.5 L477,564.5 L476,565.0 L475,567.0 L474,564.0 L473,567.0 L472,563.5 L471,566.0 L470,565.0 L469,567.0 L468,565.5 L467,565.5 L466,564.5 L465,565.5 L464,563.5 L463,568.0 L462,566.0 L461,566.5 L460,563.5 L459,568.0 L458,563.5 L457,564.5 L456,563.5 L455,566.5 L454,565.5 L453,566.0 L452,564.0 L451,564.5 L450,564.0 L449,566.5 L448,564.5 L447,568.0 L446,564.0 L445,566.0 L444,565.0 L443,568.5 L442,564.5 L441,565.5 L440,563.5 L439,565.5 L438,565.0 L437,565.0 L436,565.0 L435,568.5 L434,565.0 L433,565.5 L432,565.5 L431,564.5 L430,564.0 L429,565.5 L428,565.0 L427,566.0 L426,563.5 L425,565.0 L424,565.0 L423,564.5 L422,564.0 L421,564.0 L420,564.5 L419,564.5 L418,565.0 L417,566.5 L416,565.0 L415,567.5 L414,564.5 L413,563.5 L412,563.5 L411,567.0 L410,565.0 L409,567.0 L408,565.5 L407,565.0 L406,565.0 L405,567.5 L404,564.5 L403,565.5 L402,563.5 L401,566.0 L400,564.0 L399,564.5 L398,564.0 L397,565.5 L396,565.5 L395,565.5 L394,564.5 L393,566.5 L392,564.0 L391,567.5 L390,564.0 L389,567.0 L388,565.0 L387,564.5 L386,565.5 L385,566.0 L384,564.5 L383,566.0 L382,564.5 L381,566.5 L380,563.5 L379,566.0 L378,565.5 L377,565.5 L376,564.0 L375,566.5 L374,566.0 L373,567.5 L372,565.0 L371,565.0 L370,566.0 L369,565.0 L368,563.5 L367,566.5 L366,564.5 L365,566.5 L364,565.0 L363,563.5 L362,564.0 L361,566.5 L360,565.5 L359,568.0 L358,565.0 L357,566.5 L356,564.0 L355,566.5 L354,563.5 L353,566.5 L352,563.5 L351,566.5 L350,565.0 L349,565.5 L348,565.5 L347,566.5 L346,564.0 L345,564.0 L344,563.5 L343,566.5 L342,566.0 L341,566.0 L340,564.0 L339,566.5 L338,564.5 L337,565.0 L336,565.5 L335,568.5 L334,564.5 L333,566.0 L332,564.5 L331,565.5 L330,565.5 L329,566.5 L328,565.0 L327,567.0 L326,564.0 L325,564.0 L324,565.5 L323,565.5 L322,565.5 L321,566.5 L320,564.0 L319,567.5 L318,565.0 L317,566.0 L316,564.0 L315,568.0 L314,563.5 L313,567.0 L312,564.5 L311,564.5 L310,563.5 L309,568.5 L308,564.0 L307,565.0 L306,564.0 L305,568.5 L304,564.5 L303,564.5 L302,565.0 L301,564.0 L300,564.0 L299,566.0 L298,565.0 L297,565.5 L296,565.5 L295,565.5 L294,564.0 L293,567.0 L292,566.0 L291,566.0 L290,564.5 L289,565.5 L288,565.5 L287,566.0 L286,565.0 L285,564.0 L284,566.0 L283,565.5 L282,564.0 L281,566.5 L280,564.0 L279,565.0 L278,566.0 L277,565.0 L276,565.0 L275,567.5 L274,565.5 L273,566.0 L272,565.5 L271,564.5 L270,566.0 L269,565.5 L268,565.0 L267,565.0 L266,564.5 L265,564.0 L264,564.5 L263,566.0 L262,565.5 L261,566.0 L260,565.5 L259,565.5 L258,564.0 L257,565.5 L256,564.5 L255,566.0 L254,565.0 L253,566.0 L252,565.0 L251,567.5 L250,565.5 L249,564.0 L248,564.0 L247,565.0 L246,564.5 L245,565.0 L244,565.0 L243,566.5 L242,563.5 L241,567.0 L240,563.5 L239,564.0 L238,564.5 L237,565.5 L236,565.5 L235,566.0 L234,565.0 L233,565.5 L232,565.5 L231,564.0 L230,564.0 L229,566.5 L228,565.0 L227,565.0 L226,564.5 L225,565.5 L224,565.0 L223,567.5 L222,565.0 L221,567.0 L220,563.5 L219,565.0 L218,565.5 L217,565.5 L216,565.5 L215,566.0 L214,564.5 L213,566.0 L212,565.0 L211,567.0 L210,565.0 L209,567.5 L208,565.0 L207,567.5 L206,564.0 L205,566.0 L204,565.0 L203,566.0 L202,565.0 L201,567.0 L200,565.5 L199,567.5 L198,564.5 L197,565.5 L196,565.0 L195,566.5 L194,564.5 L193,568.0 L192,564.5 L191,567.0 L190,564.5 L189,567.0 L188,564.0 L187,566.0 L186,565.5 L185,567.5 L184,565.5 L183,564.5 L182,564.5 L181,564.0 L180,566.0 L179,564.5 L178,564.0 L177,563.5 L176,565.5 L175,566.0 L174,564.5 L173,567.5 L172,565.5 L171,563.5 L170,565.0 L169,565.5 L168,564.5 L167,567.0 L166,565.0 L165,566.5 L164,565.0 L163,566.5 L162,564.0 L161,566.5 L160,565.5 L159,566.0 L158,563.5 L157,566.0 L156,564.5 L155,565.0 L154,564.5 L153,568.5 L152,564.5 L151,566.0 L150,563.5 L149,566.5 L148,566.0 L147,568.5 L146,564.5 L145,566.0 L144,564.5 L143,564.5 L142,564.0 L141,565.5 L140,565.0 L139,563.5 L138,565.5 L137,566.5 L136,564.0 L135,566.5 L134,564.5 L133,567.0 L132,565.5 L131,567.5 L130,563.5 L129,566.5 L128,563.5 L127,566.5 L126,565.5 L125,566.0 L124,563.5 L123,566.5 L122,565.5 L121,565.5 L120,564.5 L119,566.0 L118,565.0 L117,565.0 L116,564.5 L115,566.5 L114,572.8 L113,580.1 L112,585.9 L111,592.1 L110,597.9 L109,608.7 L108,613.0 L107,613.5 L106,611.0 L105,614.0 L104,612.5 L103,615.5 L102,612.5 L101,611.5 L100,611.0 L99,612.5 L98,611.0 L97,611.0 L96,613.0 L95,615.5 L94,611.5 L93,611.5 L92,613.5 L91,613.5 L90,612.0 L89,615.0 L88,612.5 L87,612.5 L86,613.5 L85,614.0 L84,612.0 L83,612.5 L82,612.0 L81,612.5 L80,612.0 L79,613.0 L78,612.5 L77,612.5 L76,612.5 L75,613.5 L74,611.5 L73,612.5 L72,611.5 L71,615.5 L70,612.5 L69,615.5 L68,611.5 L67,613.0 L66,611.0 L65,615.0 L64,612.5 L63,613.0 L62,613.0 L61,615.0 L60,612.5 L59,613.5 L58,611.5 L57,612.0 L56,613.0 L55,612.5 L54,612.0 L53,614.5 L52,612.0 L51,613.5 L50,612.5 L49,613.5 L48,612.5 L47,611.5 L46,611.5 L45,616.0 L44,612.5 L43,613.5 L42,611.0 L41,613.0 L40,612.5 L39,616.0 L38,612.0 L37,614.5 L36,611.5 L35,613.0 L34,612.5 L33,613.0 L32,613.0 L31,613.5 L30,611.5 L29,614.0 L28,612.5 L27,611.5 L26,613.0 L25,612.5 L24,613.5 L23,612.0 L22,611.5 L21,612.0 L20,612.0 L19,613.5 L18,611.0 L17,613.0 L16,613.0 L15,612.5 L14,613.5 L13,613.5Z" fill="#1d3ea4"/>
<path d="M13,548.3 L14,545.8 L15,548.3 L16,547.8 L17,547.8 L18,547.3 L19,548.3 L20,545.8 L21,548.3 L22,545.8 L23,547.8 L24,547.3 L25,547.8 L26,545.8 L27,548.3 L28,547.3 L29,548.3 L30,547.8 L31,548.3 L32,547.8 L33,547.8 L34,546.3 L35,547.8 L36,548.3 L37,548.3 L38,545.8 L39,548.3 L40,546.3 L41,548.3 L42,547.3 L43,547.8 L44,545.3 L45,547.8 L46,546.8 L47,548.3 L48,545.8 L49,548.3 L50,545.3 L51,548.3 L52,546.3 L53,547.8 L54,545.3 L55,548.3 L56,547.8 L57,548.3 L58,548.3 L59,547.8 L60,545.3 L61,547.8 L62,546.3 L63,548.3 L64,547.3 L65,548.3 L66,548.3 L67,548.3 L68,547.3 L69,548.3 L70,547.8 L71,548.3 L72,546.8 L73,548.3 L74,545.8 L75,547.8 L76,547.3 L77,548.3 L78,547.3 L79,547.8 L80,548.3 L81,547.8 L82,546.8 L83,548.3 L84,545.8 L85,548.3 L86,547.3 L87,547.8 L88,545.3 L89,547.8 L90,545.8 L91,548.3 L92,545.3 L93,548.3 L94,547.3 L95,548.3 L96,547.3 L97,548.3 L98,547.8 L99,547.8 L100,547.8 L101,547.8 L102,547.8 L103,547.8 L104,547.3 L105,548.3 L106,546.3 L107,548.3 L108,545.3 L109,548.3 L110,540.6 L111,535.8 L112,527.6 L113,523.4 L114,516.2 L115,510.9 L116,502.7 L117,498.0 L118,497.0 L119,498.5 L120,496.5 L121,498.5 L122,496.5 L123,498.5 L124,497.5 L125,498.0 L126,497.5 L127,498.5 L128,498.5 L129,498.5 L130,497.0 L131,498.0 L132,495.5 L133,498.5 L134,498.0 L135,498.5 L136,495.5 L137,498.5 L138,495.5 L139,498.0 L140,495.5 L141,498.5 L142,498.0 L143,498.0 L144,495.5 L145,498.5 L146,498.0 L147,498.5 L148,496.0 L149,498.5 L150,497.5 L151,498.5 L152,495.5 L153,498.5 L154,496.5 L155,498.0 L156,498.5 L157,498.0 L158,497.5 L159,498.5 L160,498.5 L161,498.5 L162,497.5 L163,498.5 L164,496.0 L165,498.5 L166,495.5 L167,498.0 L168,497.5 L169,498.5 L170,495.5 L171,498.0 L172,497.5 L173,498.5 L174,498.0 L175,498.5 L176,495.5 L177,498.0 L178,497.5 L179,498.5 L180,498.0 L181,498.5 L182,498.0 L183,498.5 L184,497.0 L185,498.0 L186,497.5 L187,498.0 L188,497.5 L189,498.5 L190,498.0 L191,498.5 L192,498.0 L193,498.5 L194,498.0 L195,498.0 L196,498.0 L197,498.0 L198,497.5 L199,498.5 L200,497.5 L201,498.5 L202,495.5 L203,498.0 L204,497.5 L205,498.5 L206,496.5 L207,498.5 L208,496.5 L209,498.0 L210,498.5 L211,498.0 L212,495.5 L213,498.5 L214,496.5 L215,498.0 L216,498.0 L217,498.5 L218,498.0 L219,498.5 L220,497.5 L221,498.5 L222,497.0 L223,498.5 L224,496.5 L225,498.5 L226,497.5 L227,498.5 L228,498.5 L229,498.5 L230,498.0 L231,498.5 L232,497.0 L233,498.5 L234,496.5 L235,498.5 L236,497.5 L237,498.0 L238,498.0 L239,498.5 L240,497.5 L241,498.5 L242,497.5 L243,498.5 L244,497.0 L245,498.5 L246,498.5 L247,498.5 L248,495.5 L249,498.5 L250,496.0 L251,498.5 L252,497.0 L253,498.5 L254,496.5 L255,498.0 L256,496.0 L257,498.5 L258,498.5 L259,498.0 L260,496.0 L261,498.5 L262,496.0 L263,498.0 L264,497.5 L265,498.5 L266,495.5 L267,498.5 L268,495.5 L269,498.5 L270,496.5 L271,498.5 L272,498.5 L273,498.5 L274,497.5 L275,498.5 L276,498.0 L277,498.5 L278,497.5 L279,498.5 L280,497.0 L281,498.5 L282,498.5 L283,498.5 L284,497.0 L285,498.5 L286,497.5 L287,498.0 L288,496.5 L289,498.5 L290,497.0 L291,498.0 L292,498.5 L293,498.0 L294,497.5 L295,498.0 L296,497.5 L297,498.5 L298,497.5 L299,498.5 L300,496.0 L301,498.0 L302,498.5 L303,498.0 L304,495.5 L305,498.5 L306,498.0 L307,498.0 L308,498.0 L309,498.0 L310,497.0 L311,498.5 L312,497.5 L313,498.0 L314,495.5 L315,498.5 L316,497.0 L317,498.0 L318,498.0 L319,498.5 L320,497.0 L321,498.0 L322,497.5 L323,498.5 L324,495.5 L325,498.0 L326,497.5 L327,498.5 L328,497.0 L329,498.5 L330,498.0 L331,498.5 L332,498.0 L333,498.5 L334,495.5 L335,498.0 L336,497.0 L337,498.5 L338,498.0 L339,498.5 L340,497.0 L341,498.5 L342,498.0 L343,498.5 L344,495.5 L345,498.5 L346,497.5 L347,498.5 L348,496.0 L349,498.0 L350,496.0 L351,498.5 L352,498.0 L353,498.5 L354,496.5 L355,498.5 L356,498.5 L357,498.5 L358,496.5 L359,498.5 L360,498.0 L361,498.5 L362,498.5 L363,498.5 L364,497.0 L365,498.5 L366,497.0 L367,498.0 L368,497.5 L369,498.5 L370,496.0 L371,498.0 L372,498.0 L373,498.0 L374,495.5 L375,498.5 L376,495.5 L377,498.0 L378,497.5 L379,498.5 L380,497.0 L381,498.5 L382,496.0 L383,498.5 L384,495.5 L385,498.0 L386,498.0 L387,498.0 L388,498.0 L389,498.0 L390,497.5 L391,498.5 L392,496.0 L393,498.0 L394,497.5 L395,498.5 L396,498.0 L397,498.5 L398,497.0 L399,498.5 L400,496.0 L401,498.5 L402,496.0 L403,498.5 L404,495.5 L405,498.0 L406,497.5 L407,498.0 L408,498.0 L409,498.5 L410,496.0 L411,498.5 L412,497.0 L413,498.5 L414,496.0 L415,498.5 L416,498.5 L417,498.5 L418,495.5 L419,498.5 L420,497.5 L421,498.0 L422,495.5 L423,498.0 L424,498.5 L425,498.5 L426,497.0 L427,498.0 L428,496.0 L429,498.5 L430,498.0 L431,498.0 L432,496.0 L433,498.5 L434,498.5 L435,498.5 L436,497.0 L437,498.0 L438,495.5 L439,498.5 L440,498.5 L441,498.0 L442,498.5 L443,498.5 L444,496.0 L445,498.5 L446,496.0 L447,498.5 L448,498.5 L449,498.5 L450,496.5 L451,498.5 L452,498.5 L453,498.0 L454,497.5 L455,498.5 L456,497.5 L457,498.5 L458,497.0 L459,498.5 L460,497.5 L461,498.5 L462,498.5 L463,498.5 L464,498.5 L465,498.5 L466,496.0 L467,498.0 L468,497.5 L469,498.5 L470,498.0 L471,498.5 L472,497.5 L473,498.0 L474,498.5 L475,498.0 L476,496.5 L477,498.5 L478,498.0 L479,498.5 L480,498.0 L481,498.5 L482,497.5 L483,498.5 L484,496.0 L485,498.5 L486,497.5 L487,498.0 L488,497.5 L489,498.5 L490,498.5 L491,498.5 L492,496.0 L493,498.5 L494,495.5 L495,498.5 L496,497.5 L497,498.5 L498,496.5 L499,498.5 L500,497.0 L501,498.0 L502,497.0 L503,498.5 L504,498.5 L505,498.5 L506,495.5 L507,498.5 L508,495.5 L509,498.5 L510,498.5 L511,498.5 L512,497.5 L513,498.5 L514,496.5 L515,498.5 L516,496.0 L517,498.5 L518,498.0 L519,498.5 L520,496.5 L521,498.5 L522,498.0 L523,498.0 L524,497.5 L525,498.5 L526,495.5 L527,498.5 L528,496.0 L529,498.0 L530,498.0 L531,498.5 L532,497.0 L533,498.5 L534,497.5 L535,498.5 L536,497.5 L537,498.5 L538,497.5 L539,498.5 L540,497.0 L541,498.0 L542,498.0 L543,498.5 L544,498.0 L545,498.5 L546,495.5 L547,498.5 L548,497.5 L549,498.5 L550,497.5 L551,498.5 L552,495.5 L553,498.5 L554,498.0 L555,498.0 L556,497.5 L557,498.5 L558,497.5 L559,498.5 L560,498.5 L561,498.0 L562,498.5 L563,498.5 L564,497.5 L565,498.5 L566,497.5 L567,498.5 L568,498.0 L569,498.5 L570,497.5 L571,498.0 L572,497.5 L573,498.0 L574,496.0 L575,498.0 L576,496.0 L577,498.5 L578,496.0 L579,498.5 L580,497.5 L581,498.0 L582,497.5 L583,498.5 L584,496.0 L585,498.5 L586,496.5 L587,498.5 L588,498.5 L589,498.0 L590,496.0 L591,498.0 L592,497.5 L593,498.5 L594,497.5 L595,498.5 L596,498.0 L597,498.5 L598,497.0 L599,498.5 L600,496.5 L601,498.0 L602,498.0 L603,498.0 L604,497.5 L605,498.5 L606,495.5 L607,498.0 L608,498.5 L609,498.0 L610,506.0 L611,518.4 L612,527.4 L613,538.3 L614,548.3 L615,548.3 L616,545.8 L617,548.3 L618,545.8 L619,547.8 L620,545.8 L621,547.8 L622,545.3 L623,548.3 L624,548.3 L625,547.8 L626,545.3 L627,548.3 L628,547.3 L629,548.3 L630,547.8 L631,548.3 L632,546.3 L633,548.3 L634,548.3 L635,548.3 L636,546.3 L637,547.8 L638,548.3 L639,548.3 L640,548.3 L641,547.8 L642,547.3 L643,548.3 L644,547.3 L645,547.8 L646,547.8 L647,547.8 L648,547.3 L649,547.8 L650,545.3 L651,548.3 L652,547.3 L653,548.3 L654,546.3 L655,548.3 L656,547.3 L657,548.3 L658,546.3 L659,548.3 L660,547.8 L661,548.3 L662,545.3 L663,547.8 L664,546.8 L665,547.8 L666,546.3 L667,548.3 L668,547.3 L669,548.3 L670,545.3 L671,548.3 L672,546.8 L673,548.3 L674,546.3 L675,548.3 L676,547.3 L677,548.3 L678,545.8 L679,548.3 L680,547.3 L681,548.3 L682,548.3 L683,548.3 L684,546.8 L685,547.8 L686,547.3 L687,547.8 L688,547.3 L689,548.3 L690,547.3 L691,548.3 L692,547.3 L693,548.3 L694,547.3 L695,548.3 L696,546.8 L697,548.3 L698,545.3 L699,547.8 L700,547.3 L701,548.3 L702,548.3 L703,548.3 L704,547.3 L705,548.3 L706,547.8 L707,547.8 L708,547.3 L709,548.3 L710,547.3 L711,548.3 L712,546.8 L713,548.3 L714,548.3 L715,548.3 L716,547.8 L717,547.8 L718,547.3 L719,548.3 L720,547.3 L721,548.3 L722,546.3 L723,547.8 L724,548.3 L725,547.8 L726,546.8 L727,547.8 L728,547.8 L729,548.3 L730,546.8 L731,547.8 L732,547.3 L733,548.3 L734,545.8 L735,547.8 L736,545.8 L737,547.8 L738,545.3 L739,547.8 L740,548.3 L741,547.8 L742,546.8 L743,548.3 L744,547.3 L745,548.3 L746,547.8 L747,547.8 L748,546.3 L749,547.8 L750,548.3 L751,548.3 L752,547.8 L753,548.3 L754,546.3 L755,547.8 L756,545.8 L757,548.3 L758,547.3 L759,548.3 L760,547.8 L761,547.8 L762,545.3 L763,548.3 L764,547.3 L765,548.3 L766,545.8 L767,548.3 L768,546.8 L769,548.3 L770,546.3 L771,547.8 L772,546.8 L773,547.8 L774,545.8 L775,548.3 L776,546.3 L777,547.8 L778,547.3 L779,548.3 L780,547.3 L781,548.3 L782,546.8 L783,548.3 L784,545.3 L785,548.3 L786,545.3 L787,548.3 L788,547.3 L789,548.3 L790,545.3 L791,548.3 L792,545.3 L793,547.8 L794,546.3 L795,548.3 L796,545.8 L797,548.3 L798,548.3 L799,548.3 L800,546.8 L801,547.8 L802,545.8 L803,548.3 L804,547.3 L805,547.8 L806,546.3 L807,548.3 L808,545.3 L809,547.8 L810,547.3 L811,548.3 L812,547.3 L813,548.3 L814,547.3 L815,548.3 L816,546.8 L817,547.8 L818,547.3 L819,547.8 L820,546.3 L821,548.3 L822,547.3 L823,547.8 L824,547.3 L825,548.3 L826,545.8 L827,548.3 L828,546.8 L829,548.3 L830,547.8 L831,548.3 L832,547.3 L833,548.3 L834,548.3 L835,548.3 L836,546.8 L837,548.3 L838,546.8 L839,547.8 L840,548.3 L841,548.3 L842,545.8 L843,547.8 L844,547.3 L845,548.3 L846,545.8 L847,548.3 L848,545.8 L849,548.3 L850,546.8 L851,548.3 L852,548.3 L853,548.3 L854,546.3 L855,548.3 L856,547.8 L857,548.3 L858,547.3 L859,548.3 L860,547.8 L861,548.3 L862,545.3 L863,548.3 L864,546.3 L865,547.8 L866,547.3 L867,548.3 L868,547.8 L869,547.8 L870,548.3 L871,548.3 L872,545.8 L873,548.3 L874,545.8 L875,547.8 L876,546.8 L877,548.3 L878,545.8 L879,548.3 L880,545.3 L881,548.3 L882,547.8 L883,548.3 L884,547.3 L885,548.3 L886,545.3 L887,547.8 L888,545.3 L889,548.3 L890,545.8 L891,548.3 L892,547.3 L893,548.3 L894,546.3 L895,547.8 L896,546.3 L897,548.3 L898,547.8 L899,548.3 L900,546.8 L901,548.3 L902,546.3 L903,547.8 L904,548.3 L905,548.3 L906,547.8 L907,548.3 L908,547.8 L909,548.3 L910,547.3 L911,548.3 L912,547.3 L913,547.8 L914,547.8 L915,547.8 L916,547.3 L917,547.8 L918,547.8 L919,548.3 L920,547.8 L921,548.3 L922,547.3 L923,548.3 L924,545.3 L925,548.3 L926,547.3 L927,548.3 L928,547.3 L929,548.3 L930,546.8 L931,548.3 L932,545.8 L933,548.3 L934,546.3 L935,547.8 L936,548.3 L937,548.3 L938,547.8 L939,548.3 L940,547.3 L941,548.3 L942,547.3 L943,548.3 L944,546.3 L945,547.8 L946,546.8 L947,548.3 L948,546.8 L949,548.3 L950,546.8 L951,548.3 L952,546.3 L953,548.3 L954,547.3 L955,548.3 L956,546.3 L957,548.3 L958,547.3 L959,547.8 L960,548.3 L961,547.8 L962,548.3 L963,548.3 L964,548.3 L965,548.3 L966,548.3 L967,547.8 L968,547.3 L969,547.8 L970,547.3 L971,547.8 L972,547.3 L973,547.8 L974,548.3 L975,548.3 L976,546.3 L977,548.3 L978,546.8 L979,548.3 L980,546.3 L981,548.3 L982,545.3 L983,547.8 L984,547.8 L985,547.8 L986,545.3 L987,548.3 L988,547.3 L989,548.3 L990,547.8 L991,548.3 L992,547.3 L993,548.3 L994,548.3 L995,547.8 L996,547.8 L997,548.3 L998,545.3 L999,548.3 L1000,545.3 L1001,547.8 L1002,548.3 L1003,547.8 L1004,547.8 L1005,547.8 L1006,545.3 L1007,548.3 L1008,548.3 L1009,548.3 L1010,547.8 L1011,548.3 L1011,612.8 L1010,611.3 L1009,611.3 L1008,611.3 L1007,611.3 L1006,611.8 L1005,614.3 L1004,611.3 L1003,612.3 L1002,611.3 L1001,612.3 L1000,611.8 L999,612.3 L998,611.3 L997,612.3 L996,611.3 L995,611.8 L994,611.3 L993,613.8 L992,611.8 L991,612.3 L990,611.8 L989,611.8 L988,611.3 L987,613.8 L986,611.3 L985,613.8 L984,611.3 L983,611.3 L982,611.8 L981,611.3 L980,611.3 L979,611.3 L978,611.3 L977,612.8 L976,611.3 L975,611.3 L974,611.3 L973,612.3 L972,611.3 L971,614.3 L970,611.3 L969,611.8 L968,611.8 L967,613.8 L966,611.8 L965,614.3 L964,611.3 L963,611.8 L962,611.3 L961,613.8 L960,611.3 L959,611.8 L958,611.8 L957,612.8 L956,611.3 L955,611.8 L954,611.8 L953,613.3 L952,611.8 L951,613.8 L950,611.3 L949,612.8 L948,611.8 L947,613.8 L946,611.3 L945,612.3 L944,611.3 L943,613.3 L942,611.3 L941,613.8 L940,611.3 L939,614.3 L938,611.8 L937,613.3 L936,611.8 L935,611.3 L934,611.8 L933,612.3 L932,611.8 L931,613.8 L930,611.3 L929,614.3 L928,611.3 L927,611.3 L926,611.3 L925,614.3 L924,611.3 L923,611.3 L922,611.3 L921,612.3 L920,611.3 L919,611.8 L918,611.8 L917,612.3 L916,611.3 L915,612.8 L914,611.8 L913,612.3 L912,611.3 L911,612.3 L910,611.3 L909,612.3 L908,611.8 L907,612.8 L906,611.8 L905,612.3 L904,611.8 L903,613.3 L902,611.3 L901,611.8 L900,611.3 L899,612.3 L898,611.8 L897,613.8 L896,611.3 L895,612.8 L894,611.3 L893,612.8 L892,611.3 L891,613.8 L890,611.8 L889,612.8 L888,611.3 L887,612.3 L886,611.3 L885,613.8 L884,611.3 L883,614.3 L882,611.8 L881,612.3 L880,611.3 L879,613.8 L878,611.8 L877,612.8 L876,611.3 L875,613.3 L874,611.3 L873,611.8 L872,611.3 L871,613.8 L870,611.3 L869,613.3 L868,611.8 L867,613.8 L866,611.8 L865,614.3 L864,611.3 L863,613.3 L862,611.8 L861,612.3 L860,611.8 L859,613.3 L858,611.8 L857,612.3 L856,611.3 L855,614.3 L854,611.3 L853,612.3 L852,611.8 L851,614.4 L850,611.4 L849,612.4 L848,611.4 L847,611.9 L846,611.4 L845,614.4 L844,611.9 L843,612.4 L842,611.4 L841,613.9 L840,611.9 L839,613.9 L838,611.9 L837,612.4 L836,611.4 L835,612.4 L834,611.4 L833,611.4 L832,611.4 L831,612.9 L830,611.9 L829,612.4 L828,611.4 L827,612.9 L826,611.4 L825,612.4 L824,611.9 L823,611.9 L822,611.4 L821,613.4 L820,611.4 L819,613.4 L818,611.4 L817,612.4 L816,611.9 L815,612.9 L814,611.9 L813,614.4 L812,611.4 L811,612.9 L810,611.4 L809,613.4 L808,611.9 L807,612.4 L806,611.9 L805,611.4 L804,611.9 L803,614.4 L802,611.9 L801,612.4 L800,611.4 L799,612.9 L798,611.4 L797,613.9 L796,611.9 L795,613.9 L794,611.4 L793,611.9 L792,611.9 L791,611.9 L790,611.4 L789,612.4 L788,611.4 L787,612.9 L786,611.9 L785,612.5 L784,611.5 L783,613.5 L782,611.5 L781,612.5 L780,611.5 L779,613.0 L778,612.0 L777,611.5 L776,611.5 L775,612.0 L774,611.5 L773,611.5 L772,612.0 L771,614.5 L770,612.0 L769,613.5 L768,611.5 L767,613.5 L766,611.5 L765,613.5 L764,611.5 L763,612.0 L762,611.5 L761,613.0 L760,612.0 L759,611.5 L758,611.5 L757,612.5 L756,611.5 L755,612.1 L754,611.6 L753,612.1 L752,612.1 L751,611.6 L750,611.6 L749,611.6 L748,611.6 L747,612.6 L746,611.6 L745,611.6 L744,611.6 L743,612.1 L742,611.6 L741,612.6 L740,611.6 L739,611.6 L738,612.1 L737,614.6 L736,612.1 L735,612.6 L734,611.7 L733,612.7 L732,612.2 L731,612.7 L730,611.7 L729,612.7 L728,612.2 L727,612.7 L726,611.7 L725,614.2 L724,611.7 L723,613.2 L722,612.2 L721,612.2 L720,612.2 L719,613.3 L718,611.8 L717,614.8 L716,612.3 L715,614.8 L714,611.8 L713,614.8 L712,612.3 L711,612.3 L710,612.3 L709,614.3 L708,611.8 L707,612.9 L706,611.9 L705,611.9 L704,611.9 L703,614.4 L702,612.4 L701,611.9 L700,611.9 L699,614.9 L698,612.4 L697,614.0 L696,612.0 L695,614.5 L694,612.5 L693,612.5 L692,612.0 L691,613.0 L690,612.0 L689,615.1 L688,612.1 L687,613.6 L686,612.1 L685,614.1 L684,612.1 L683,614.1 L682,612.1 L681,612.2 L680,612.2 L679,612.2 L678,612.7 L677,614.7 L676,612.2 L675,612.3 L674,612.8 L673,613.8 L672,612.8 L671,612.3 L670,612.3 L669,612.9 L668,612.4 L667,614.4 L666,612.4 L665,614.9 L664,612.9 L663,613.0 L662,613.0 L661,614.5 L660,613.0 L659,614.0 L658,612.6 L657,614.1 L656,612.6 L655,613.6 L654,612.6 L653,613.7 L652,613.2 L651,615.7 L650,612.7 L649,614.3 L648,612.8 L647,614.3 L646,612.8 L645,613.9 L644,613.4 L643,614.4 L642,612.9 L641,613.5 L640,613.0 L639,614.0 L638,613.6 L637,613.6 L636,613.6 L635,613.7 L634,613.7 L633,613.2 L632,613.2 L631,615.8 L630,613.3 L629,613.8 L628,613.4 L627,616.4 L626,613.5 L625,616.5 L624,613.5 L623,614.6 L622,614.1 L621,615.6 L620,613.7 L619,614.7 L618,613.8 L617,615.3 L616,608.0 L615,601.7 L614,595.4 L613,588.6 L612,582.9 L611,577.1 L610,569.8 L609,564.5 L608,563.5 L607,564.5 L606,563.5 L605,564.5 L604,564.0 L603,564.5 L602,564.0 L601,566.0 L600,563.5 L599,566.5 L598,563.5 L597,564.5 L596,563.5 L595,564.0 L594,564.0 L593,565.0 L592,563.5 L591,565.5 L590,563.5 L589,564.5 L588,563.5 L587,564.5 L586,563.5 L585,566.0 L584,563.5 L583,564.5 L582,563.5 L581,566.0 L580,563.5 L579,565.5 L578,563.5 L577,565.5 L576,563.5 L575,565.0 L574,563.5 L573,565.0 L572,563.5 L571,564.0 L570,564.0 L569,566.0 L568,563.5 L567,566.5 L566,563.5 L565,564.0 L564,564.0 L563,565.5 L562,563.5 L561,564.5 L560,564.0 L559,565.0 L558,563.5 L557,565.5 L556,563.5 L555,565.5 L554,564.0 L553,563.5 L552,564.0 L551,564.5 L550,563.5 L549,564.5 L548,563.5 L547,565.0 L546,563.5 L545,564.5 L544,563.5 L543,563.5 L542,564.0 L541,564.5 L540,563.5 L539,566.0 L538,563.5 L537,565.0 L536,563.5 L535,564.5 L534,563.5 L533,565.0 L532,563.5 L531,565.0 L530,563.5 L529,564.5 L528,563.5 L527,564.5 L526,563.5 L525,566.5 L524,563.5 L523,564.0 L522,563.5 L521,564.0 L520,563.5 L519,566.5 L518,564.0 L517,566.0 L516,563.5 L515,564.5 L514,564.0 L513,566.5 L512,563.5 L511,564.5 L510,564.0 L509,564.5 L508,563.5 L507,566.0 L506,563.5 L505,566.5 L504,563.5 L503,564.0 L502,563.5 L501,565.5 L500,564.0 L499,563.5 L498,563.5 L497,565.5 L496,564.0 L495,565.0 L494,563.5 L493,563.5 L492,563.5 L491,564.5 L490,564.0 L489,566.5 L488,563.5 L487,566.5 L486,563.5 L485,566.5 L484,563.5 L483,565.0 L482,563.5 L481,564.0 L480,563.5 L479,565.0 L478,563.5 L477,564.5 L476,563.5 L475,566.0 L474,563.5 L473,566.5 L472,563.5 L471,565.5 L470,563.5 L469,565.5 L468,563.5 L467,563.5 L466,563.5 L465,564.5 L464,563.5 L463,566.0 L462,564.0 L461,566.0 L460,563.5 L459,566.5 L458,563.5 L457,564.5 L456,563.5 L455,565.0 L454,563.5 L453,564.0 L452,563.5 L451,564.5 L450,564.0 L449,566.0 L448,564.0 L447,566.5 L446,563.5 L445,564.5 L444,563.5 L443,566.5 L442,563.5 L441,565.0 L440,563.5 L439,564.5 L438,564.0 L437,564.5 L436,563.5 L435,566.5 L434,564.0 L433,563.5 L432,563.5 L431,564.5 L430,563.5 L429,564.0 L428,564.0 L427,565.0 L426,563.5 L425,563.5 L424,563.5 L423,563.5 L422,563.5 L421,564.0 L420,563.5 L419,564.5 L418,563.5 L417,566.5 L416,563.5 L415,566.5 L414,564.0 L413,563.5 L412,563.5 L411,566.0 L410,564.0 L409,566.0 L408,563.5 L407,564.5 L406,564.0 L405,565.5 L404,563.5 L403,563.5 L402,563.5 L401,564.5 L400,563.5 L399,563.5 L398,564.0 L397,565.5 L396,563.5 L395,565.5 L394,563.5 L393,564.5 L392,563.5 L391,566.5 L390,563.5 L389,566.5 L388,563.5 L387,564.5 L386,563.5 L385,566.0 L384,564.0 L383,565.0 L382,564.0 L381,565.0 L380,563.5 L379,565.5 L378,563.5 L377,564.5 L376,563.5 L375,565.0 L374,564.0 L373,566.0 L372,563.5 L371,564.5 L370,564.0 L369,563.5 L368,563.5 L367,565.5 L366,563.5 L365,564.5 L364,564.0 L363,563.5 L362,563.5 L361,565.0 L360,563.5 L359,566.0 L358,563.5 L357,565.0 L356,564.0 L355,564.5 L354,563.5 L353,565.5 L352,563.5 L351,565.5 L350,563.5 L349,564.5 L348,563.5 L347,566.5 L346,563.5 L345,563.5 L344,563.5 L343,564.5 L342,564.0 L341,565.0 L340,563.5 L339,564.5 L338,564.0 L337,564.5 L336,563.5 L335,566.5 L334,563.5 L333,565.0 L332,563.5 L331,565.0 L330,564.0 L329,566.5 L328,563.5 L327,565.0 L326,564.0 L325,564.0 L324,563.5 L323,563.5 L322,563.5 L321,565.0 L320,564.0 L319,565.5 L318,564.0 L317,564.5 L316,563.5 L315,566.5 L314,563.5 L313,566.5 L312,563.5 L311,564.5 L310,563.5 L309,566.5 L308,564.0 L307,564.0 L306,564.0 L305,566.5 L304,563.5 L303,564.5 L302,564.0 L301,563.5 L300,563.5 L299,564.0 L298,564.0 L297,563.5 L296,563.5 L295,563.5 L294,564.0 L293,566.0 L292,564.0 L291,564.5 L290,564.0 L289,564.5 L288,564.0 L287,566.0 L286,564.0 L285,564.0 L284,564.0 L283,565.0 L282,563.5 L281,566.0 L280,563.5 L279,564.0 L278,564.0 L277,564.5 L276,563.5 L275,566.0 L274,563.5 L273,565.5 L272,563.5 L271,564.5 L270,564.0 L269,565.5 L268,563.5 L267,565.0 L266,563.5 L265,563.5 L264,564.0 L263,565.0 L262,564.0 L261,564.0 L260,563.5 L259,565.0 L258,563.5 L257,564.5 L256,563.5 L255,564.5 L254,563.5 L253,564.5 L252,564.0 L251,566.0 L250,564.0 L249,564.0 L248,563.5 L247,564.5 L246,563.5 L245,565.0 L244,563.5 L243,564.5 L242,563.5 L241,565.0 L240,563.5 L239,563.5 L238,563.5 L237,564.5 L236,563.5 L235,565.0 L234,564.0 L233,563.5 L232,563.5 L231,564.0 L230,564.0 L229,565.0 L228,564.0 L227,565.0 L226,563.5 L225,563.5 L224,563.5 L223,566.5 L222,563.5 L221,566.0 L220,563.5 L219,563.5 L218,563.5 L217,564.0 L216,563.5 L215,565.0 L214,564.0 L213,566.0 L212,564.0 L211,566.5 L210,563.5 L209,565.5 L208,563.5 L207,565.5 L206,563.5 L205,566.0 L204,564.0 L203,564.5 L202,563.5 L201,566.0 L200,564.0 L199,566.5 L198,563.5 L197,565.5 L196,563.5 L195,565.0 L194,563.5 L193,566.0 L192,564.0 L191,565.5 L190,563.5 L189,566.0 L188,563.5 L187,565.0 L186,564.0 L185,566.5 L184,563.5 L183,564.5 L182,563.5 L181,563.5 L180,564.0 L179,563.5 L178,563.5 L177,563.5 L176,563.5 L175,565.5 L174,564.0 L173,566.5 L172,563.5 L171,563.5 L170,563.5 L169,563.5 L168,564.0 L167,566.0 L166,564.0 L165,565.5 L164,563.5 L163,565.0 L162,564.0 L161,565.0 L160,563.5 L159,564.5 L158,563.5 L157,564.0 L156,563.5 L155,564.5 L154,563.5 L153,566.5 L152,564.0 L151,564.5 L150,563.5 L149,564.5 L148,564.0 L147,566.5 L146,564.0 L145,565.5 L144,563.5 L143,564.5 L142,563.5 L141,564.0 L140,564.0 L139,563.5 L138,564.0 L137,564.5 L136,563.5 L135,564.5 L134,563.5 L133,565.5 L132,564.0 L131,565.5 L130,563.5 L129,566.5 L128,563.5 L127,565.5 L126,564.0 L125,564.5 L124,563.5 L123,564.5 L122,564.0 L121,564.5 L120,563.5 L119,565.0 L118,564.0 L117,563.5 L116,563.5 L115,564.5 L114,570.8 L113,580.1 L112,584.4 L111,591.1 L110,597.4 L109,607.2 L108,611.0 L107,611.5 L106,611.0 L105,613.0 L104,611.5 L103,613.5 L102,611.0 L101,611.0 L100,611.0 L99,612.0 L98,611.0 L97,611.0 L96,611.0 L95,614.0 L94,611.0 L93,611.0 L92,611.5 L91,611.5 L90,611.0 L89,613.5 L88,611.5 L87,611.0 L86,611.5 L85,613.0 L84,611.5 L83,612.0 L82,611.0 L81,612.0 L80,611.0 L79,612.0 L78,611.0 L77,612.0 L76,611.0 L75,613.5 L74,611.0 L73,612.5 L72,611.0 L71,613.5 L70,611.0 L69,614.0 L68,611.0 L67,612.0 L66,611.0 L65,614.0 L64,611.5 L63,613.0 L62,611.0 L61,613.5 L60,611.0 L59,612.5 L58,611.5 L57,611.5 L56,611.0 L55,611.5 L54,611.5 L53,613.0 L52,611.0 L51,611.5 L50,611.0 L49,612.0 L48,611.0 L47,611.5 L46,611.5 L45,614.0 L44,611.0 L43,612.5 L42,611.0 L41,612.0 L40,611.0 L39,614.0 L38,611.0 L37,614.0 L36,611.5 L35,611.5 L34,611.0 L33,612.0 L32,611.5 L31,612.0 L30,611.5 L29,612.0 L28,611.0 L27,611.0 L26,611.0 L25,611.0 L24,611.5 L23,611.5 L22,611.0 L21,611.5 L20,611.0 L19,613.5 L18,611.0 L17,611.0 L16,611.0 L15,611.5 L14,611.5 L13,612.0Z" fill="#2a57e2"/>
<path d="M14.5,546.8 V610.5 M17.5,548.8 V610.0 M18.5,548.3 V610.0 M22.5,546.8 V610.0 M24.5,548.3 V610.5 M27.5,549.3 V610.0 M28.5,548.3 V610.0 M33.5,548.8 V611.0 M34.5,547.3 V610.0 M38.5,546.8 V610.0 M43.5,548.8 V611.5 M46.5,547.8 V610.5 M51.5,549.3 V610.5 M52.5,547.3 V610.0 M53.5,548.8 V612.0 M58.5,549.3 V610.5 M63.5,549.3 V612.0 M68.5,548.3 V610.0 M69.5,549.3 V613.0 M72.5,547.8 V610.0 M75.5,548.8 V612.5 M79.5,548.8 V611.0 M80.5,549.3 V610.0 M84.5,546.8 V610.5 M87.5,548.8 V610.0 M94.5,548.3 V610.0 M95.5,549.3 V613.0 M96.5,548.3 V610.0 M98.5,548.8 V610.0 M100.5,548.8 V610.0 M102.5,548.8 V610.0 M103.5,548.8 V612.5 M105.5,549.3 V612.0 M106.5,547.3 V610.0 M109.5,549.3 V606.2 M111.5,536.8 V590.1 M113.5,524.4 V579.1 M114.5,517.2 V569.8 M119.5,499.5 V564.0 M126.5,498.5 V563.0 M127.5,499.5 V564.5 M128.5,499.5 V562.5 M129.5,499.5 V565.5 M130.5,498.0 V562.5 M131.5,499.0 V564.5 M137.5,499.5 V563.5 M139.5,499.0 V562.5 M140.5,496.5 V563.0 M142.5,499.0 V562.5 M147.5,499.5 V565.5 M149.5,499.5 V563.5 M152.5,496.5 V563.0 M153.5,499.5 V565.5 M154.5,497.5 V562.5 M155.5,499.0 V563.5 M159.5,499.5 V563.5 M164.5,497.0 V562.5 M165.5,499.5 V564.5 M169.5,499.5 V562.5 M172.5,498.5 V562.5 M173.5,499.5 V565.5 M174.5,499.0 V563.0 M175.5,499.5 V564.5 M177.5,499.0 V562.5 M178.5,498.5 V562.5 M179.5,499.5 V562.5 M181.5,499.5 V562.5 M183.5,499.5 V563.5 M184.5,498.0 V562.5 M186.5,498.5 V563.0 M190.5,499.0 V562.5 M192.5,499.0 V563.0 M197.5,499.0 V564.5 M201.5,499.5 V565.0 M202.5,496.5 V562.5 M203.5,499.0 V563.5 M206.5,497.5 V562.5 M208.5,497.5 V562.5 M209.5,499.0 V564.5 M210.5,499.5 V562.5 M211.5,499.0 V565.5 M213.5,499.5 V565.0 M214.5,497.5 V563.0 M216.5,499.0 V562.5 M218.5,499.0 V562.5 M220.5,498.5 V562.5 M223.5,499.5 V565.5 M225.5,499.5 V562.5 M226.5,498.5 V562.5 M227.5,499.5 V564.0 M228.5,499.5 V563.0 M232.5,498.0 V562.5 M233.5,499.5 V562.5 M235.5,499.5 V564.0 M237.5,499.0 V563.5 M239.5,499.5 V562.5 M241.5,499.5 V564.0 M242.5,498.5 V562.5 M243.5,499.5 V563.5 M246.5,499.5 V562.5 M249.5,499.5 V563.0 M251.5,499.5 V565.0 M252.5,498.0 V563.0 M255.5,499.0 V563.5 M256.5,497.0 V562.5 M257.5,499.5 V563.5 M260.5,497.0 V562.5 M261.5,499.5 V563.0 M266.5,496.5 V562.5 M267.5,499.5 V564.0 M269.5,499.5 V564.5 M271.5,499.5 V563.5 M273.5,499.5 V564.5 M277.5,499.5 V563.5 M281.5,499.5 V565.0 M282.5,499.5 V562.5 M284.5,498.0 V563.0 M285.5,499.5 V563.0 M286.5,498.5 V563.0 M288.5,497.5 V563.0 M292.5,499.5 V563.0 M296.5,498.5 V562.5 M298.5,498.5 V563.0 M300.5,497.0 V562.5 M307.5,499.0 V563.0 M309.5,499.0 V565.5 M310.5,498.0 V562.5 M311.5,499.5 V563.5 M312.5,498.5 V562.5 M314.5,496.5 V562.5 M315.5,499.5 V565.5 M317.5,499.0 V563.5 M318.5,499.0 V563.0 M323.5,499.5 V562.5 M326.5,498.5 V563.0 M327.5,499.5 V564.0 M330.5,499.0 V563.0 M331.5,499.5 V564.0 M332.5,499.0 V562.5 M333.5,499.5 V564.0 M336.5,498.0 V562.5 M339.5,499.5 V563.5 M342.5,499.0 V563.0 M346.5,498.5 V562.5 M349.5,499.0 V563.5 M350.5,497.0 V562.5 M351.5,499.5 V564.5 M358.5,497.5 V562.5 M362.5,499.5 V562.5 M365.5,499.5 V563.5 M367.5,499.0 V564.5 M370.5,497.0 V563.0 M371.5,499.0 V563.5 M379.5,499.5 V564.5 M381.5,499.5 V564.0 M383.5,499.5 V564.0 M387.5,499.0 V563.5 M391.5,499.5 V565.5 M392.5,497.0 V562.5 M394.5,498.5 V562.5 M398.5,498.0 V563.0 M401.5,499.5 V563.5 M402.5,497.0 V562.5 M403.5,499.5 V562.5 M404.5,496.5 V562.5 M405.5,499.0 V564.5 M406.5,498.5 V563.0 M407.5,499.0 V563.5 M408.5,499.0 V562.5 M414.5,497.0 V563.0 M420.5,498.5 V562.5 M421.5,499.0 V563.0 M422.5,496.5 V562.5 M424.5,499.5 V562.5 M426.5,498.0 V562.5 M427.5,499.0 V564.0 M429.5,499.5 V563.0 M432.5,497.0 V562.5 M434.5,499.5 V563.0 M436.5,498.0 V562.5 M437.5,499.0 V563.5 M440.5,499.5 V562.5 M441.5,499.0 V564.0 M444.5,497.0 V562.5 M445.5,499.5 V563.5 M448.5,499.5 V563.0 M449.5,499.5 V565.0 M450.5,497.5 V563.0 M463.5,499.5 V565.0 M465.5,499.5 V563.5 M471.5,499.5 V564.5 M475.5,499.0 V565.0 M479.5,499.5 V564.0 M480.5,499.0 V562.5 M482.5,498.5 V562.5 M483.5,499.5 V564.0 M488.5,498.5 V562.5 M489.5,499.5 V565.5 M490.5,499.5 V563.0 M493.5,499.5 V562.5 M495.5,499.5 V564.0 M499.5,499.5 V562.5 M502.5,498.0 V562.5 M503.5,499.5 V563.0 M513.5,499.5 V565.5 M514.5,497.5 V563.0 M516.5,497.0 V562.5 M520.5,497.5 V562.5 M521.5,499.5 V563.0 M522.5,499.0 V562.5 M531.5,499.5 V564.0 M534.5,498.5 V562.5 M535.5,499.5 V563.5 M539.5,499.5 V565.0 M546.5,496.5 V562.5 M547.5,499.5 V564.0 M550.5,498.5 V562.5 M551.5,499.5 V563.5 M554.5,499.0 V563.0 M557.5,499.5 V564.5 M558.5,498.5 V562.5 M560.5,499.5 V563.0 M562.5,499.5 V562.5 M563.5,499.5 V564.5 M567.5,499.5 V565.5 M570.5,498.5 V563.0 M575.5,499.0 V564.0 M576.5,497.0 V562.5 M577.5,499.5 V564.5 M579.5,499.5 V564.5 M580.5,498.5 V562.5 M581.5,499.0 V565.0 M586.5,497.5 V562.5 M587.5,499.5 V563.5 M589.5,499.0 V563.5 M591.5,499.0 V564.5 M592.5,498.5 V562.5 M593.5,499.5 V564.0 M594.5,498.5 V563.0 M597.5,499.5 V563.5 M599.5,499.5 V565.5 M600.5,497.5 V562.5 M606.5,496.5 V562.5 M607.5,499.0 V563.5 M610.5,507.0 V568.8 M613.5,539.3 V587.6 M618.5,546.8 V612.8 M619.5,548.8 V613.7 M621.5,548.8 V614.6 M622.5,546.3 V613.1 M626.5,546.3 V612.5 M627.5,549.3 V615.4 M628.5,548.3 V612.4 M629.5,549.3 V612.8 M631.5,549.3 V614.8 M633.5,549.3 V612.2 M635.5,549.3 V612.7 M636.5,547.3 V612.6 M637.5,548.8 V612.6 M638.5,549.3 V612.6 M640.5,549.3 V612.0 M641.5,548.8 V612.5 M642.5,548.3 V611.9 M643.5,549.3 V613.4 M644.5,548.3 V612.4 M645.5,548.8 V612.9 M647.5,548.8 V613.3 M648.5,548.3 V611.8 M650.5,546.3 V611.7 M651.5,549.3 V614.7 M653.5,549.3 V612.7 M657.5,549.3 V613.1 M658.5,547.3 V611.6 M660.5,548.8 V612.0 M662.5,546.3 V612.0 M665.5,548.8 V613.9 M667.5,549.3 V613.4 M669.5,549.3 V611.9 M672.5,547.8 V611.8 M673.5,549.3 V612.8 M675.5,549.3 V611.3 M677.5,549.3 V613.7 M680.5,548.3 V611.2 M682.5,549.3 V611.1 M685.5,548.8 V613.1 M686.5,548.3 V611.1 M687.5,548.8 V612.6 M688.5,548.3 V611.1 M690.5,548.3 V611.0 M692.5,548.3 V611.0 M694.5,548.3 V611.5 M696.5,547.8 V611.0 M697.5,549.3 V613.0 M698.5,546.3 V611.4 M699.5,548.8 V613.9 M700.5,548.3 V610.9 M702.5,549.3 V611.4 M703.5,549.3 V613.4 M708.5,548.3 V610.8 M709.5,549.3 V613.3 M710.5,548.3 V611.3 M713.5,549.3 V613.8 M714.5,549.3 V610.8 M717.5,548.8 V613.8 M719.5,549.3 V612.3 M721.5,549.3 V611.2 M722.5,547.3 V611.2 M726.5,547.8 V610.7 M727.5,548.8 V611.7 M728.5,548.8 V611.2 M729.5,549.3 V611.7 M730.5,547.8 V610.7 M731.5,548.8 V611.7 M732.5,548.3 V611.2 M733.5,549.3 V611.7 M735.5,548.8 V611.6 M739.5,548.8 V610.6 M742.5,547.8 V610.6 M743.5,549.3 V611.1 M746.5,548.8 V610.6 M747.5,548.8 V611.6 M750.5,549.3 V610.6 M751.5,549.3 V610.6 M752.5,548.8 V611.1 M754.5,547.3 V610.6 M757.5,549.3 V611.5 M759.5,549.3 V610.5 M762.5,546.3 V610.5 M763.5,549.3 V611.0 M772.5,547.8 V611.0 M777.5,548.8 V610.5 M779.5,549.3 V612.0 M782.5,547.8 V610.5 M787.5,549.3 V611.9 M788.5,548.3 V610.4 M789.5,549.3 V611.4 M790.5,546.3 V610.4 M791.5,549.3 V610.9 M792.5,546.3 V610.9 M793.5,548.8 V610.9 M796.5,546.8 V610.9 M797.5,549.3 V612.9 M801.5,548.8 V611.4 M802.5,546.8 V610.9 M804.5,548.3 V610.9 M806.5,547.3 V610.9 M810.5,548.3 V610.4 M816.5,547.8 V610.9 M817.5,548.8 V611.4 M818.5,548.3 V610.4 M819.5,548.8 V612.4 M820.5,547.3 V610.4 M821.5,549.3 V612.4 M822.5,548.3 V610.4 M825.5,549.3 V611.4 M826.5,546.8 V610.4 M828.5,547.8 V610.4 M829.5,549.3 V611.4 M830.5,548.8 V610.9 M831.5,549.3 V611.9 M834.5,549.3 V610.4 M838.5,547.8 V610.9 M841.5,549.3 V612.9 M843.5,548.8 V611.4 M849.5,549.3 V611.4 M850.5,547.8 V610.4 M851.5,549.3 V613.4 M852.5,549.3 V610.8 M855.5,549.3 V613.3 M856.5,548.8 V610.3 M860.5,548.8 V610.8 M864.5,547.3 V610.3 M865.5,548.8 V613.3 M867.5,549.3 V612.8 M868.5,548.8 V610.8 M870.5,549.3 V610.3 M872.5,546.8 V610.3 M873.5,549.3 V610.8 M882.5,548.8 V610.8 M883.5,549.3 V613.3 M885.5,549.3 V612.8 M887.5,548.8 V611.3 M890.5,546.8 V610.8 M891.5,549.3 V612.8 M893.5,549.3 V611.8 M895.5,548.8 V611.8 M900.5,547.8 V610.3 M904.5,549.3 V610.8 M909.5,549.3 V611.3 M910.5,548.3 V610.3 M913.5,548.8 V611.3 M914.5,548.8 V610.8 M915.5,548.8 V611.8 M916.5,548.3 V610.3 M925.5,549.3 V613.3 M928.5,548.3 V610.3 M933.5,549.3 V611.3 M934.5,547.3 V610.8 M936.5,549.3 V610.8 M937.5,549.3 V612.3 M940.5,548.3 V610.3 M942.5,548.3 V610.3 M944.5,547.3 V610.3 M947.5,549.3 V612.8 M948.5,547.8 V610.8 M949.5,549.3 V611.8 M952.5,547.3 V610.8 M954.5,548.3 V610.8 M955.5,549.3 V610.8 M957.5,549.3 V611.8 M960.5,549.3 V610.3 M962.5,549.3 V610.3 M965.5,549.3 V613.3 M966.5,549.3 V610.8 M967.5,548.8 V612.8 M973.5,548.8 V611.3 M976.5,547.3 V610.3 M978.5,547.8 V610.3 M979.5,549.3 V610.3 M983.5,548.8 V610.3 M985.5,548.8 V612.8 M986.5,546.3 V610.3 M987.5,549.3 V612.8 M988.5,548.3 V610.3 M990.5,548.8 V610.8 M991.5,549.3 V611.3 M1000.5,546.3 V610.8 M1002.5,549.3 V610.3 M1006.5,546.3 V610.8 M1007.5,549.3 V610.3 M1011.5,549.3 V611.8" stroke="#5580ff" stroke-width="1" opacity="0.3" fill="none"/>
<path d="M17.5,234.9 V245.1 M18.5,236.4 V243.6 M19.5,235.3 V244.7 M24.5,236.1 V243.9 M30.5,236.1 V243.9 M31.5,235.6 V244.4 M32.5,236.0 V244.0 M37.5,235.0 V245.0 M38.5,235.8 V244.2 M41.5,236.7 V243.3 M42.5,234.8 V245.2 M43.5,236.7 V243.3 M44.5,235.9 V244.1 M46.5,236.6 V243.4 M47.5,235.4 V244.6 M49.5,236.8 V243.2 M51.5,236.9 V243.1 M52.5,236.9 V243.1 M54.5,235.0 V245.0 M56.5,236.3 V243.7 M61.5,236.5 V243.5 M64.5,236.2 V243.8 M65.5,236.9 V243.1 M67.5,235.6 V244.4 M69.5,236.8 V243.2 M72.5,235.8 V244.2 M75.5,235.6 V244.4 M78.5,235.8 V244.2 M79.5,235.9 V244.1 M82.5,236.4 V243.6 M83.5,236.0 V244.0 M86.5,236.4 V243.6 M90.5,235.8 V244.2 M93.5,235.3 V244.7 M96.5,235.5 V244.5 M99.5,234.6 V245.4 M105.5,234.8 V245.2 M107.5,234.7 V245.3 M108.5,237.0 V243.0 M121.5,261.4 V269.2 M123.5,257.8 V266.4 M124.5,256.9 V264.3 M126.5,253.8 V261.7 M130.5,247.8 V257.6 M134.5,243.2 V254.1 M136.5,242.2 V251.6 M137.5,242.7 V249.5 M138.5,240.1 V250.6 M139.5,241.6 V247.6 M141.5,239.0 V247.6 M142.5,239.0 V246.3 M143.5,237.4 V246.9 M144.5,236.3 V246.9 M146.5,236.7 V244.6 M148.5,235.8 V243.8 M149.5,235.1 V243.8 M152.5,235.0 V241.9 M153.5,233.1 V243.2 M159.5,232.4 V241.1 M162.5,232.6 V239.9 M163.5,232.6 V239.6 M170.5,232.0 V238.7 M174.5,231.9 V238.2 M176.5,230.4 V239.5 M180.5,229.8 V239.8 M181.5,229.5 V240.0 M183.5,230.1 V239.2 M184.5,231.4 V237.9 M187.5,231.1 V238.0 M188.5,230.0 V239.1 M190.5,230.6 V238.4 M192.5,229.7 V239.3 M193.5,229.7 V239.2 M195.5,229.6 V239.3 M196.5,230.9 V237.9 M201.5,231.2 V237.5 M202.5,230.6 V238.1 M208.5,230.0 V238.7 M209.5,229.3 V239.4 M212.5,230.7 V238.0 M215.5,230.6 V238.1 M216.5,231.1 V237.6 M220.5,230.1 V238.5 M226.5,230.1 V238.5 M229.5,229.4 V239.2 M231.5,228.9 V239.7 M232.5,228.9 V239.7 M234.5,229.9 V238.7 M236.5,230.4 V238.2 M237.5,230.6 V238.0 M240.5,229.3 V239.3 M242.5,229.3 V239.3 M243.5,229.9 V238.7 M247.5,229.6 V239.0 M248.5,228.9 V239.7 M255.5,230.9 V237.7 M257.5,229.7 V238.9 M259.5,231.1 V237.5 M262.5,229.8 V238.8 M263.5,229.7 V238.9 M265.5,228.8 V239.8 M270.5,230.2 V238.4 M276.5,230.4 V238.2 M277.5,229.3 V239.3 M279.5,230.5 V238.1 M280.5,229.3 V239.3 M282.5,229.9 V238.7 M284.5,230.8 V237.8 M285.5,229.2 V239.4 M286.5,230.8 V237.8 M287.5,229.0 V239.6 M288.5,230.7 V237.9 M293.5,229.4 V239.2 M296.5,230.7 V237.9 M297.5,230.5 V238.1 M298.5,229.7 V238.9 M300.5,230.3 V238.3 M308.5,229.2 V239.4 M311.5,231.2 V237.4 M312.5,228.9 V239.7 M316.5,229.6 V239.0 M319.5,230.7 V237.9 M321.5,230.8 V237.8 M327.5,230.3 V238.3 M328.5,230.6 V238.0 M329.5,229.5 V239.1 M331.5,231.1 V237.5 M332.5,231.1 V237.5 M333.5,230.6 V238.0 M336.5,231.1 V237.5 M339.5,229.4 V239.2 M346.5,230.1 V238.5 M349.5,229.0 V239.6 M350.5,230.8 V237.8 M353.5,230.0 V238.6 M358.5,229.0 V239.6 M359.5,230.3 V238.3 M361.5,229.8 V238.8 M362.5,230.9 V237.7 M363.5,229.2 V239.4 M364.5,231.3 V237.3 M365.5,229.8 V238.8 M371.5,229.3 V239.3 M376.5,229.3 V239.3 M377.5,231.2 V237.4 M383.5,230.6 V238.0 M387.5,228.9 V239.7 M392.5,231.2 V237.4 M393.5,230.2 V238.4 M395.5,229.2 V239.4 M398.5,229.9 V238.7 M399.5,230.2 V238.4 M400.5,229.9 V238.7 M403.5,230.0 V238.6 M404.5,230.4 V238.2 M405.5,229.2 V239.4 M406.5,230.5 V238.1 M407.5,229.0 V239.6 M411.5,230.2 V238.4 M416.5,229.9 V238.7 M417.5,229.3 V239.3 M418.5,230.7 V237.9 M420.5,229.6 V239.0 M422.5,230.9 V237.7 M424.5,229.3 V239.3 M425.5,229.7 V238.9 M430.5,229.6 V239.0 M431.5,229.6 V239.0 M434.5,229.7 V238.9 M435.5,230.3 V238.3 M436.5,230.9 V237.7 M438.5,229.9 V238.7 M439.5,231.1 V237.5 M441.5,229.9 V238.7 M442.5,230.4 V238.2 M446.5,229.8 V238.8 M449.5,229.9 V238.7 M450.5,231.1 V237.5 M456.5,229.9 V238.7 M460.5,231.1 V237.5 M461.5,229.0 V239.6 M463.5,230.1 V238.5 M467.5,228.9 V239.7 M469.5,229.8 V238.8 M473.5,230.2 V238.4 M474.5,231.2 V237.4 M476.5,229.2 V239.4 M483.5,230.3 V238.3 M486.5,230.9 V237.7 M487.5,228.8 V239.8 M490.5,230.2 V238.4 M491.5,230.6 V238.0 M493.5,230.0 V238.6 M495.5,230.7 V237.9 M498.5,230.6 V238.0 M506.5,231.0 V237.6 M510.5,230.8 V237.8 M512.5,230.5 V238.1 M515.5,229.2 V239.4 M517.5,230.2 V238.4 M518.5,231.2 V237.4 M522.5,230.7 V237.9 M523.5,231.2 V237.4 M525.5,229.7 V238.9 M527.5,229.1 V239.5 M528.5,231.2 V237.4 M531.5,228.8 V239.8 M532.5,229.2 V239.4 M537.5,231.1 V237.5 M538.5,230.5 V238.1 M545.5,231.1 V237.5 M550.5,229.5 V239.1 M554.5,229.8 V238.8 M558.5,230.1 V238.5 M560.5,230.1 V238.5 M561.5,229.7 V238.9 M563.5,230.5 V238.1 M564.5,229.2 V239.4 M565.5,229.1 V239.5 M572.5,229.5 V239.1 M573.5,229.0 V239.6 M574.5,230.6 V238.0 M576.5,229.5 V239.1 M579.5,229.0 V239.6 M580.5,230.6 V238.0 M588.5,229.3 V239.3 M590.5,230.2 V238.4 M593.5,230.2 V238.4 M596.5,230.4 V238.2 M599.5,231.0 V237.6 M601.5,229.2 V239.4 M604.5,231.1 V237.5 M605.5,229.0 V239.6 M607.5,229.1 V239.5 M625.5,205.6 V216.1 M626.5,208.4 V215.9 M628.5,209.5 V220.0 M629.5,210.7 V221.2 M630.5,213.1 V221.3 M635.5,219.1 V226.0 M637.5,221.1 V227.8 M642.5,223.9 V233.0 M643.5,225.7 V232.5 M645.5,225.2 V235.6 M646.5,227.2 V234.8 M647.5,227.8 V235.4 M654.5,230.7 V238.8 M655.5,231.6 V238.6 M657.5,230.5 V241.0 M659.5,232.2 V240.5 M660.5,231.3 V242.0 M662.5,233.1 V241.1 M663.5,232.9 V241.8 M665.5,233.6 V241.9 M666.5,232.8 V243.0 M668.5,234.2 V242.3 M669.5,235.1 V241.7 M672.5,233.6 V244.0 M674.5,234.4 V243.6 M675.5,235.8 V242.4 M676.5,235.1 V243.3 M679.5,235.9 V243.0 M683.5,236.7 V242.7 M687.5,235.3 V244.5 M690.5,236.0 V244.0 M691.5,236.0 V244.0 M692.5,236.2 V243.9 M694.5,234.9 V245.3 M699.5,236.6 V243.8 M701.5,235.5 V245.0 M703.5,235.9 V244.6 M708.5,234.8 V245.8 M712.5,235.7 V244.9 M714.5,236.8 V243.9 M715.5,235.7 V245.0 M719.5,236.8 V243.9 M720.5,237.1 V243.7 M727.5,235.8 V244.9 M730.5,236.4 V244.3 M733.5,236.1 V244.6 M737.5,236.6 V244.1 M738.5,236.9 V243.9 M740.5,235.1 V245.6 M742.5,235.6 V245.2 M743.5,236.9 V243.9 M744.5,237.0 V243.8 M747.5,237.0 V243.8 M748.5,236.3 V244.5 M749.5,237.2 V243.6 M750.5,235.2 V245.6 M753.5,234.9 V245.9 M754.5,236.2 V244.6 M755.5,235.5 V245.3 M759.5,235.6 V245.2 M762.5,236.6 V244.2 M763.5,236.7 V244.1 M764.5,235.4 V245.4 M766.5,235.9 V244.9 M767.5,237.4 V243.4 M771.5,236.2 V244.6 M773.5,236.9 V243.9 M777.5,235.7 V245.1 M779.5,235.2 V245.6 M790.5,234.9 V245.9 M793.5,235.5 V245.3 M795.5,235.7 V245.1 M796.5,235.5 V245.3 M800.5,236.2 V244.6 M801.5,235.1 V245.7 M803.5,237.3 V243.5 M804.5,235.1 V245.7 M805.5,237.0 V243.8 M807.5,236.5 V244.3 M810.5,235.5 V245.3 M818.5,235.8 V245.0 M821.5,236.8 V244.0 M824.5,236.5 V244.3 M827.5,236.1 V244.7 M829.5,236.5 V244.3 M831.5,236.1 V244.7 M833.5,235.1 V245.7 M835.5,236.1 V244.7 M837.5,236.3 V244.5 M839.5,236.9 V243.9 M842.5,236.8 V244.0 M844.5,236.8 V244.0 M845.5,236.9 V243.9 M847.5,235.7 V245.1 M850.5,237.3 V243.5 M852.5,236.1 V244.7 M854.5,236.5 V244.3 M855.5,236.5 V244.3 M862.5,236.5 V244.3 M863.5,235.9 V244.9 M864.5,237.2 V243.6 M867.5,235.5 V245.3 M868.5,236.2 V244.6 M870.5,236.1 V244.7 M875.5,235.5 V245.3 M876.5,237.0 V243.8 M877.5,236.0 V244.8 M879.5,237.2 V243.6 M880.5,236.0 V244.8 M881.5,235.8 V245.0 M884.5,236.5 V244.3 M887.5,237.0 V243.8 M888.5,236.5 V244.3 M890.5,235.6 V245.2 M891.5,235.7 V245.1 M894.5,237.1 V243.7 M899.5,235.1 V245.7 M903.5,236.2 V244.6 M904.5,235.2 V245.6 M905.5,237.3 V243.5 M908.5,236.2 V244.6 M909.5,235.2 V245.6 M919.5,235.5 V245.3 M920.5,235.5 V245.3 M925.5,237.2 V243.6 M926.5,235.1 V245.7 M927.5,237.2 V243.6 M930.5,236.1 V244.7 M931.5,237.2 V243.6 M932.5,236.8 V244.0 M933.5,236.9 V243.9 M934.5,236.2 V244.6 M938.5,236.4 V244.4 M941.5,235.7 V245.1 M944.5,236.0 V244.8 M945.5,236.6 V244.2 M949.5,235.5 V245.3 M950.5,236.1 V244.7 M953.5,235.7 V245.1 M954.5,236.7 V244.1 M955.5,236.0 V244.8 M957.5,236.6 V244.2 M959.5,236.8 V244.0 M962.5,236.7 V244.1 M963.5,235.9 V244.9 M965.5,237.1 V243.7 M967.5,237.1 V243.7 M968.5,236.0 V244.8 M969.5,237.3 V243.5 M975.5,235.7 V245.1 M981.5,236.9 V243.9 M984.5,236.5 V244.3 M991.5,235.6 V245.2 M997.5,235.7 V245.1 M998.5,236.4 V244.4 M1004.5,235.2 V245.6 M1005.5,235.9 V244.9" stroke="#c04a0c" stroke-width="1" fill="none" opacity="0.75"/>
<path d="M109,240 L110.5,243 L112.5,278.5 M608,234.3 L609,232 L611.5,197 L612.8,194.5" stroke="#c8500e" stroke-width="1.4" fill="none" opacity="0.7"/>
<path d="M13.0,239.6 L14.0,239.8 L15.0,240.6 L16.0,239.9 L17.0,239.8 L18.0,240.4 L19.0,240.6 L20.0,240.5 L21.0,240.0 L22.0,239.8 L23.0,240.7 L24.0,240.7 L25.0,239.4 L26.0,240.7 L27.0,240.1 L28.0,239.9 L29.0,239.5 L30.0,240.3 L31.0,239.8 L32.0,240.3 L33.0,239.8 L34.0,240.0 L35.0,239.8 L36.0,240.7 L37.0,240.2 L38.0,240.5 L39.0,239.5 L40.0,240.0 L41.0,240.5 L42.0,240.2 L43.0,240.2 L44.0,240.0 L45.0,239.9 L46.0,239.8 L47.0,240.1 L48.0,239.8 L49.0,240.4 L50.0,239.7 L51.0,240.4 L52.0,240.3 L53.0,240.2 L54.0,240.4 L55.0,239.9 L56.0,239.5 L57.0,240.2 L58.0,239.7 L59.0,240.1 L60.0,239.6 L61.0,239.6 L62.0,240.1 L63.0,240.4 L64.0,239.8 L65.0,240.5 L66.0,240.2 L67.0,239.5 L68.0,239.4 L69.0,239.9 L70.0,240.2 L71.0,240.4 L72.0,239.4 L73.0,240.6 L74.0,240.1 L75.0,239.9 L76.0,240.1 L77.0,239.3 L78.0,240.4 L79.0,240.5 L80.0,239.4 L81.0,239.6 L82.0,239.5 L83.0,239.5 L84.0,240.6 L85.0,240.4 L86.0,239.6 L87.0,239.3 L88.0,239.4 L89.0,239.4 L90.0,239.6 L91.0,240.0 L92.0,239.4 L93.0,239.8 L94.0,239.7 L95.0,240.3 L96.0,240.5 L97.0,239.8 L98.0,240.6 L99.0,239.7 L100.0,239.7 L101.0,239.4 L102.0,239.4 L103.0,240.7 L104.0,239.5 L105.0,240.5 L106.0,239.8 L107.0,240.0 L108.0,239.5 L109.0,240.1 M113.0,279.2 L114.0,277.7 L115.0,276.0 L116.0,274.4 L117.0,272.1 L118.0,270.1 L119.0,268.0 L120.0,266.7 L121.0,264.7 L122.0,263.7 L123.0,261.5 L124.0,260.1 L125.0,259.6 L126.0,257.7 L127.0,256.4 L128.0,255.6 L129.0,254.1 L130.0,253.2 L131.0,251.6 L132.0,250.5 L133.0,248.9 L134.0,249.2 L135.0,247.3 L136.0,247.3 L137.0,246.0 L138.0,245.7 L139.0,244.6 L140.0,244.0 L141.0,243.1 L142.0,242.1 L143.0,241.8 L144.0,240.9 L145.0,241.1 L146.0,240.3 L147.0,240.5 L148.0,239.7 L149.0,239.0 L150.0,238.6 L151.0,239.4 L152.0,239.1 L153.0,238.7 L154.0,237.4 L155.0,237.0 L156.0,237.3 L157.0,236.9 L158.0,237.2 L159.0,237.0 L160.0,236.9 L161.0,236.8 L162.0,236.1 L163.0,236.1 L164.0,235.7 L165.0,236.2 L166.0,235.5 L167.0,235.3 L168.0,235.3 L169.0,235.1 L170.0,234.9 L171.0,235.5 L172.0,234.8 L173.0,234.5 L174.0,234.8 L175.0,235.4 L176.0,235.3 L177.0,235.4 L178.0,235.1 L179.0,234.8 L180.0,234.5 L181.0,234.1 L182.0,234.9 L183.0,234.8 L184.0,234.6 L185.0,234.0 L186.0,235.0 L187.0,234.6 L188.0,234.5 L189.0,235.0 L190.0,235.1 L191.0,234.4 L192.0,234.8 L193.0,234.5 L194.0,234.8 L195.0,234.8 L196.0,234.2 L197.0,233.8 L198.0,234.8 L199.0,233.8 L200.0,235.0 L201.0,233.9 L202.0,234.9 L203.0,235.0 L204.0,234.4 L205.0,233.7 L206.0,234.6 L207.0,233.7 L208.0,234.6 L209.0,234.8 L210.0,234.6 L211.0,234.1 L212.0,234.4 L213.0,233.8 L214.0,234.6 L215.0,234.6 L216.0,234.7 L217.0,233.7 L218.0,234.9 L219.0,234.6 L220.0,234.4 L221.0,234.6 L222.0,234.1 L223.0,234.8 L224.0,234.5 L225.0,234.2 L226.0,233.9 L227.0,234.1 L228.0,234.7 L229.0,234.6 L230.0,234.1 L231.0,234.9 L232.0,234.2 L233.0,234.4 L234.0,233.7 L235.0,234.9 L236.0,234.9 L237.0,234.6 L238.0,234.1 L239.0,233.9 L240.0,233.9 L241.0,234.7 L242.0,234.7 L243.0,234.2 L244.0,233.9 L245.0,234.7 L246.0,234.7 L247.0,234.9 L248.0,234.3 L249.0,234.8 L250.0,234.3 L251.0,234.7 L252.0,233.6 L253.0,234.3 L254.0,234.7 L255.0,234.6 L256.0,235.0 L257.0,234.5 L258.0,234.0 L259.0,234.6 L260.0,234.8 L261.0,234.6 L262.0,234.5 L263.0,233.7 L264.0,233.6 L265.0,233.9 L266.0,234.1 L267.0,234.7 L268.0,234.0 L269.0,233.7 L270.0,233.7 L271.0,235.0 L272.0,233.9 L273.0,234.0 L274.0,234.8 L275.0,234.9 L276.0,234.0 L277.0,234.5 L278.0,234.2 L279.0,234.0 L280.0,234.9 L281.0,233.6 L282.0,234.5 L283.0,234.7 L284.0,234.7 L285.0,234.4 L286.0,234.9 L287.0,234.7 L288.0,234.5 L289.0,233.7 L290.0,234.8 L291.0,233.8 L292.0,233.8 L293.0,234.0 L294.0,234.3 L295.0,234.1 L296.0,234.2 L297.0,234.0 L298.0,233.9 L299.0,234.6 L300.0,234.5 L301.0,233.7 L302.0,234.9 L303.0,233.8 L304.0,234.0 L305.0,234.7 L306.0,234.8 L307.0,234.9 L308.0,234.8 L309.0,234.4 L310.0,234.9 L311.0,234.7 L312.0,234.8 L313.0,235.0 L314.0,234.9 L315.0,234.3 L316.0,234.2 L317.0,234.6 L318.0,234.8 L319.0,234.6 L320.0,234.1 L321.0,233.7 L322.0,233.8 L323.0,234.8 L324.0,234.9 L325.0,233.6 L326.0,234.1 L327.0,234.5 L328.0,234.3 L329.0,233.7 L330.0,234.8 L331.0,234.5 L332.0,234.0 L333.0,234.3 L334.0,234.1 L335.0,234.5 L336.0,234.8 L337.0,234.4 L338.0,234.0 L339.0,234.1 L340.0,234.8 L341.0,234.6 L342.0,234.1 L343.0,234.9 L344.0,234.4 L345.0,235.0 L346.0,234.9 L347.0,233.7 L348.0,234.2 L349.0,233.6 L350.0,234.9 L351.0,233.9 L352.0,233.9 L353.0,234.4 L354.0,234.9 L355.0,234.5 L356.0,234.8 L357.0,234.5 L358.0,234.4 L359.0,234.2 L360.0,234.4 L361.0,233.6 L362.0,233.8 L363.0,235.0 L364.0,233.9 L365.0,234.0 L366.0,234.3 L367.0,234.6 L368.0,233.7 L369.0,234.7 L370.0,234.4 L371.0,233.7 L372.0,234.1 L373.0,234.9 L374.0,234.6 L375.0,233.8 L376.0,234.5 L377.0,233.7 L378.0,234.2 L379.0,234.1 L380.0,235.0 L381.0,234.3 L382.0,235.0 L383.0,234.3 L384.0,234.7 L385.0,233.6 L386.0,234.8 L387.0,234.4 L388.0,234.1 L389.0,234.8 L390.0,234.9 L391.0,233.8 L392.0,233.6 L393.0,234.5 L394.0,234.8 L395.0,233.8 L396.0,234.4 L397.0,233.7 L398.0,233.7 L399.0,234.3 L400.0,234.9 L401.0,234.8 L402.0,234.6 L403.0,234.6 L404.0,233.9 L405.0,234.2 L406.0,233.8 L407.0,233.9 L408.0,233.8 L409.0,234.2 L410.0,233.6 L411.0,233.8 L412.0,234.6 L413.0,234.4 L414.0,233.9 L415.0,233.9 L416.0,234.5 L417.0,233.7 L418.0,234.7 L419.0,234.7 L420.0,234.9 L421.0,233.8 L422.0,234.7 L423.0,234.4 L424.0,233.9 L425.0,234.8 L426.0,233.9 L427.0,233.8 L428.0,234.8 L429.0,235.0 L430.0,234.6 L431.0,233.8 L432.0,234.2 L433.0,234.4 L434.0,233.9 L435.0,234.8 L436.0,234.2 L437.0,234.3 L438.0,234.3 L439.0,233.6 L440.0,234.8 L441.0,234.8 L442.0,234.9 L443.0,234.4 L444.0,234.2 L445.0,234.0 L446.0,233.8 L447.0,233.9 L448.0,234.4 L449.0,234.2 L450.0,234.6 L451.0,235.0 L452.0,233.9 L453.0,234.8 L454.0,234.1 L455.0,234.2 L456.0,234.0 L457.0,234.5 L458.0,234.2 L459.0,233.8 L460.0,234.4 L461.0,233.8 L462.0,234.0 L463.0,234.2 L464.0,234.8 L465.0,234.7 L466.0,234.4 L467.0,234.3 L468.0,234.0 L469.0,234.3 L470.0,234.3 L471.0,234.3 L472.0,234.3 L473.0,233.9 L474.0,234.1 L475.0,234.1 L476.0,233.7 L477.0,233.7 L478.0,234.6 L479.0,234.1 L480.0,234.6 L481.0,234.8 L482.0,234.5 L483.0,234.3 L484.0,234.8 L485.0,234.4 L486.0,233.7 L487.0,234.7 L488.0,234.3 L489.0,234.3 L490.0,234.6 L491.0,234.5 L492.0,234.9 L493.0,234.5 L494.0,233.8 L495.0,234.5 L496.0,234.6 L497.0,233.6 L498.0,234.6 L499.0,234.5 L500.0,234.5 L501.0,234.2 L502.0,234.1 L503.0,234.4 L504.0,233.9 L505.0,234.7 L506.0,233.8 L507.0,234.4 L508.0,234.5 L509.0,234.0 L510.0,233.8 L511.0,234.9 L512.0,235.0 L513.0,234.5 L514.0,234.7 L515.0,234.2 L516.0,234.0 L517.0,234.3 L518.0,233.6 L519.0,234.4 L520.0,234.7 L521.0,234.1 L522.0,234.9 L523.0,233.8 L524.0,234.0 L525.0,234.5 L526.0,234.4 L527.0,234.8 L528.0,233.6 L529.0,234.7 L530.0,233.7 L531.0,234.7 L532.0,234.5 L533.0,233.6 L534.0,234.8 L535.0,234.0 L536.0,234.3 L537.0,234.9 L538.0,234.1 L539.0,233.7 L540.0,233.9 L541.0,234.6 L542.0,233.8 L543.0,234.0 L544.0,233.9 L545.0,234.2 L546.0,233.8 L547.0,235.0 L548.0,234.9 L549.0,233.7 L550.0,233.8 L551.0,234.4 L552.0,235.0 L553.0,234.7 L554.0,233.8 L555.0,234.8 L556.0,233.7 L557.0,234.3 L558.0,234.6 L559.0,234.2 L560.0,234.5 L561.0,234.6 L562.0,233.9 L563.0,233.8 L564.0,234.0 L565.0,233.7 L566.0,233.8 L567.0,233.7 L568.0,234.1 L569.0,234.6 L570.0,233.8 L571.0,234.2 L572.0,233.7 L573.0,233.9 L574.0,234.1 L575.0,234.9 L576.0,233.9 L577.0,233.8 L578.0,234.8 L579.0,234.1 L580.0,234.2 L581.0,234.2 L582.0,234.3 L583.0,233.6 L584.0,234.5 L585.0,234.9 L586.0,233.8 L587.0,234.8 L588.0,234.7 L589.0,234.5 L590.0,234.5 L591.0,234.2 L592.0,234.5 L593.0,234.9 L594.0,234.7 L595.0,234.4 L596.0,234.8 L597.0,233.6 L598.0,234.2 L599.0,233.6 L600.0,234.5 L601.0,234.5 L602.0,234.3 L603.0,233.8 L604.0,233.7 L605.0,234.7 L606.0,234.3 L607.0,234.3 L608.0,234.6 M612.8,194.2 L613.8,195.8 L614.8,196.7 L615.8,198.5 L616.8,199.6 L617.8,201.3 L618.8,202.6 L619.8,203.3 L620.8,205.2 L621.8,205.9 L622.8,207.6 L623.8,209.4 L624.8,210.3 L625.8,211.9 L626.8,213.3 L627.8,215.2 L628.8,215.3 L629.8,217.5 L630.8,217.7 L631.8,219.9 L632.8,219.9 L633.8,221.6 L634.8,222.5 L635.8,222.6 L636.8,224.4 L637.8,224.9 L638.8,226.2 L639.8,226.9 L640.8,228.0 L641.8,228.1 L642.8,229.1 L643.8,229.7 L644.8,230.9 L645.8,231.4 L646.8,232.1 L647.8,232.0 L648.8,233.0 L649.8,232.4 L650.8,233.3 L651.8,233.3 L652.8,234.2 L653.8,234.4 L654.8,235.0 L655.8,235.7 L656.8,235.0 L657.8,236.1 L658.8,235.8 L659.8,236.4 L660.8,237.3 L661.8,237.2 L662.8,237.2 L663.8,238.0 L664.8,238.1 L665.8,237.3 L666.8,238.0 L667.8,238.0 L668.8,237.7 L669.8,239.0 L670.8,238.4 L671.8,238.1 L672.8,238.5 L673.8,239.4 L674.8,238.7 L675.8,239.2 L676.8,239.3 L677.8,239.4 L678.8,239.8 L679.8,239.8 L680.8,239.8 L681.8,239.3 L682.8,239.9 L683.8,239.5 L684.8,240.0 L685.8,240.1 L686.8,240.5 L687.8,239.3 L688.8,240.4 L689.8,240.4 L690.8,239.7 L691.8,240.2 L692.8,240.6 L693.8,240.4 L694.8,240.7 L695.8,239.9 L696.8,240.7 L697.8,240.7 L698.8,239.9 L699.8,240.2 L700.8,240.2 L701.8,239.6 L702.8,239.7 L703.8,240.7 L704.8,240.8 L705.8,239.9 L706.8,240.4 L707.8,240.8 L708.8,239.7 L709.8,240.0 L710.8,240.8 L711.8,240.5 L712.8,241.0 L713.8,240.5 L714.8,240.7 L715.8,240.6 L716.8,240.8 L717.8,240.0 L718.8,239.9 L719.8,240.9 L720.8,240.0 L721.8,240.9 L722.8,240.0 L723.8,240.0 L724.8,239.8 L725.8,239.9 L726.8,241.1 L727.8,240.1 L728.8,241.1 L729.8,239.8 L730.8,240.2 L731.8,240.6 L732.8,241.0 L733.8,240.0 L734.8,240.3 L735.8,240.3 L736.8,240.1 L737.8,239.8 L738.8,240.2 L739.8,240.6 L740.8,240.4 L741.8,240.4 L742.8,240.0 L743.8,240.1 L744.8,240.4 L745.8,239.9 L746.8,240.1 L747.8,240.9 L748.8,241.0 L749.8,241.0 L750.8,240.4 L751.8,241.0 L752.8,240.5 L753.8,239.8 L754.8,240.4 L755.8,241.1 L756.8,240.2 L757.8,240.2 L758.8,239.8 L759.8,240.2 L760.8,239.9 L761.8,241.1 L762.8,240.4 L763.8,240.1 L764.8,240.2 L765.8,240.5 L766.8,239.9 L767.8,240.8 L768.8,240.1 L769.8,240.3 L770.8,241.0 L771.8,240.3 L772.8,240.2 L773.8,240.8 L774.8,241.0 L775.8,240.7 L776.8,240.4 L777.8,241.0 L778.8,240.0 L779.8,241.0 L780.8,240.6 L781.8,239.9 L782.8,240.0 L783.8,240.0 L784.8,240.1 L785.8,240.7 L786.8,240.7 L787.8,240.5 L788.8,240.3 L789.8,240.0 L790.8,239.8 L791.8,240.4 L792.8,240.6 L793.8,240.8 L794.8,240.0 L795.8,239.9 L796.8,240.1 L797.8,239.8 L798.8,240.0 L799.8,240.5 L800.8,240.6 L801.8,240.1 L802.8,241.1 L803.8,239.8 L804.8,240.1 L805.8,241.0 L806.8,240.7 L807.8,240.4 L808.8,240.2 L809.8,240.7 L810.8,240.4 L811.8,240.0 L812.8,240.5 L813.8,241.1 L814.8,241.0 L815.8,240.0 L816.8,240.0 L817.8,239.9 L818.8,240.5 L819.8,240.7 L820.8,241.0 L821.8,240.6 L822.8,240.2 L823.8,241.1 L824.8,239.7 L825.8,240.5 L826.8,240.7 L827.8,240.3 L828.8,240.9 L829.8,240.9 L830.8,240.4 L831.8,240.3 L832.8,240.9 L833.8,239.7 L834.8,239.7 L835.8,239.8 L836.8,240.3 L837.8,240.4 L838.8,240.2 L839.8,240.2 L840.8,240.2 L841.8,239.9 L842.8,241.0 L843.8,240.2 L844.8,240.5 L845.8,239.9 L846.8,239.9 L847.8,239.9 L848.8,240.8 L849.8,239.9 L850.8,240.1 L851.8,240.5 L852.8,239.8 L853.8,240.4 L854.8,240.3 L855.8,240.8 L856.8,240.7 L857.8,240.0 L858.8,239.9 L859.8,241.0 L860.8,239.7 L861.8,241.0 L862.8,240.2 L863.8,240.8 L864.8,240.9 L865.8,240.5 L866.8,240.3 L867.8,240.4 L868.8,239.8 L869.8,241.1 L870.8,241.1 L871.8,239.8 L872.8,241.1 L873.8,240.0 L874.8,239.8 L875.8,241.0 L876.8,240.0 L877.8,240.1 L878.8,240.8 L879.8,240.8 L880.8,240.2 L881.8,239.8 L882.8,240.8 L883.8,239.8 L884.8,240.8 L885.8,240.3 L886.8,240.7 L887.8,239.9 L888.8,240.3 L889.8,241.0 L890.8,239.8 L891.8,240.4 L892.8,241.0 L893.8,240.5 L894.8,240.4 L895.8,241.1 L896.8,240.7 L897.8,240.7 L898.8,240.8 L899.8,240.8 L900.8,240.1 L901.8,239.8 L902.8,239.8 L903.8,240.4 L904.8,240.7 L905.8,240.0 L906.8,240.3 L907.8,240.0 L908.8,240.0 L909.8,240.1 L910.8,240.3 L911.8,240.0 L912.8,240.4 L913.8,240.7 L914.8,240.6 L915.8,239.8 L916.8,240.3 L917.8,240.5 L918.8,240.1 L919.8,240.2 L920.8,240.0 L921.8,240.6 L922.8,240.2 L923.8,239.8 L924.8,240.3 L925.8,240.9 L926.8,239.8 L927.8,239.8 L928.8,239.8 L929.8,240.0 L930.8,240.1 L931.8,240.6 L932.8,240.2 L933.8,240.7 L934.8,240.1 L935.8,239.8 L936.8,241.0 L937.8,240.5 L938.8,240.3 L939.8,239.8 L940.8,240.5 L941.8,240.9 L942.8,239.9 L943.8,239.8 L944.8,240.3 L945.8,240.6 L946.8,239.7 L947.8,240.0 L948.8,241.1 L949.8,240.7 L950.8,240.8 L951.8,240.8 L952.8,239.8 L953.8,240.8 L954.8,240.0 L955.8,240.0 L956.8,241.0 L957.8,240.1 L958.8,239.9 L959.8,240.9 L960.8,240.3 L961.8,240.9 L962.8,239.9 L963.8,240.3 L964.8,240.0 L965.8,239.9 L966.8,240.5 L967.8,240.3 L968.8,240.0 L969.8,241.0 L970.8,240.6 L971.8,240.1 L972.8,239.9 L973.8,240.8 L974.8,239.8 L975.8,240.0 L976.8,239.9 L977.8,240.9 L978.8,239.8 L979.8,240.1 L980.8,240.5 L981.8,240.9 L982.8,240.7 L983.8,240.5 L984.8,241.0 L985.8,240.3 L986.8,241.0 L987.8,240.8 L988.8,240.9 L989.8,240.4 L990.8,240.1 L991.8,240.0 L992.8,240.7 L993.8,239.9 L994.8,240.2 L995.8,240.5 L996.8,241.1 L997.8,240.6 L998.8,240.6 L999.8,239.9 L1000.8,239.7 L1001.8,240.3 L1002.8,240.5 L1003.8,239.8 L1004.8,240.1 L1005.8,239.9 L1006.8,240.6 L1007.8,240.3 L1008.8,240.2 L1009.8,240.4 L1010.8,240.7" stroke="#b04208" stroke-width="5.6" fill="none" stroke-linejoin="round" opacity="0.85"/>
<path d="M13.0,239.6 L14.0,239.8 L15.0,240.6 L16.0,239.9 L17.0,239.8 L18.0,240.4 L19.0,240.6 L20.0,240.5 L21.0,240.0 L22.0,239.8 L23.0,240.7 L24.0,240.7 L25.0,239.4 L26.0,240.7 L27.0,240.1 L28.0,239.9 L29.0,239.5 L30.0,240.3 L31.0,239.8 L32.0,240.3 L33.0,239.8 L34.0,240.0 L35.0,239.8 L36.0,240.7 L37.0,240.2 L38.0,240.5 L39.0,239.5 L40.0,240.0 L41.0,240.5 L42.0,240.2 L43.0,240.2 L44.0,240.0 L45.0,239.9 L46.0,239.8 L47.0,240.1 L48.0,239.8 L49.0,240.4 L50.0,239.7 L51.0,240.4 L52.0,240.3 L53.0,240.2 L54.0,240.4 L55.0,239.9 L56.0,239.5 L57.0,240.2 L58.0,239.7 L59.0,240.1 L60.0,239.6 L61.0,239.6 L62.0,240.1 L63.0,240.4 L64.0,239.8 L65.0,240.5 L66.0,240.2 L67.0,239.5 L68.0,239.4 L69.0,239.9 L70.0,240.2 L71.0,240.4 L72.0,239.4 L73.0,240.6 L74.0,240.1 L75.0,239.9 L76.0,240.1 L77.0,239.3 L78.0,240.4 L79.0,240.5 L80.0,239.4 L81.0,239.6 L82.0,239.5 L83.0,239.5 L84.0,240.6 L85.0,240.4 L86.0,239.6 L87.0,239.3 L88.0,239.4 L89.0,239.4 L90.0,239.6 L91.0,240.0 L92.0,239.4 L93.0,239.8 L94.0,239.7 L95.0,240.3 L96.0,240.5 L97.0,239.8 L98.0,240.6 L99.0,239.7 L100.0,239.7 L101.0,239.4 L102.0,239.4 L103.0,240.7 L104.0,239.5 L105.0,240.5 L106.0,239.8 L107.0,240.0 L108.0,239.5 L109.0,240.1 M113.0,279.2 L114.0,277.7 L115.0,276.0 L116.0,274.4 L117.0,272.1 L118.0,270.1 L119.0,268.0 L120.0,266.7 L121.0,264.7 L122.0,263.7 L123.0,261.5 L124.0,260.1 L125.0,259.6 L126.0,257.7 L127.0,256.4 L128.0,255.6 L129.0,254.1 L130.0,253.2 L131.0,251.6 L132.0,250.5 L133.0,248.9 L134.0,249.2 L135.0,247.3 L136.0,247.3 L137.0,246.0 L138.0,245.7 L139.0,244.6 L140.0,244.0 L141.0,243.1 L142.0,242.1 L143.0,241.8 L144.0,240.9 L145.0,241.1 L146.0,240.3 L147.0,240.5 L148.0,239.7 L149.0,239.0 L150.0,238.6 L151.0,239.4 L152.0,239.1 L153.0,238.7 L154.0,237.4 L155.0,237.0 L156.0,237.3 L157.0,236.9 L158.0,237.2 L159.0,237.0 L160.0,236.9 L161.0,236.8 L162.0,236.1 L163.0,236.1 L164.0,235.7 L165.0,236.2 L166.0,235.5 L167.0,235.3 L168.0,235.3 L169.0,235.1 L170.0,234.9 L171.0,235.5 L172.0,234.8 L173.0,234.5 L174.0,234.8 L175.0,235.4 L176.0,235.3 L177.0,235.4 L178.0,235.1 L179.0,234.8 L180.0,234.5 L181.0,234.1 L182.0,234.9 L183.0,234.8 L184.0,234.6 L185.0,234.0 L186.0,235.0 L187.0,234.6 L188.0,234.5 L189.0,235.0 L190.0,235.1 L191.0,234.4 L192.0,234.8 L193.0,234.5 L194.0,234.8 L195.0,234.8 L196.0,234.2 L197.0,233.8 L198.0,234.8 L199.0,233.8 L200.0,235.0 L201.0,233.9 L202.0,234.9 L203.0,235.0 L204.0,234.4 L205.0,233.7 L206.0,234.6 L207.0,233.7 L208.0,234.6 L209.0,234.8 L210.0,234.6 L211.0,234.1 L212.0,234.4 L213.0,233.8 L214.0,234.6 L215.0,234.6 L216.0,234.7 L217.0,233.7 L218.0,234.9 L219.0,234.6 L220.0,234.4 L221.0,234.6 L222.0,234.1 L223.0,234.8 L224.0,234.5 L225.0,234.2 L226.0,233.9 L227.0,234.1 L228.0,234.7 L229.0,234.6 L230.0,234.1 L231.0,234.9 L232.0,234.2 L233.0,234.4 L234.0,233.7 L235.0,234.9 L236.0,234.9 L237.0,234.6 L238.0,234.1 L239.0,233.9 L240.0,233.9 L241.0,234.7 L242.0,234.7 L243.0,234.2 L244.0,233.9 L245.0,234.7 L246.0,234.7 L247.0,234.9 L248.0,234.3 L249.0,234.8 L250.0,234.3 L251.0,234.7 L252.0,233.6 L253.0,234.3 L254.0,234.7 L255.0,234.6 L256.0,235.0 L257.0,234.5 L258.0,234.0 L259.0,234.6 L260.0,234.8 L261.0,234.6 L262.0,234.5 L263.0,233.7 L264.0,233.6 L265.0,233.9 L266.0,234.1 L267.0,234.7 L268.0,234.0 L269.0,233.7 L270.0,233.7 L271.0,235.0 L272.0,233.9 L273.0,234.0 L274.0,234.8 L275.0,234.9 L276.0,234.0 L277.0,234.5 L278.0,234.2 L279.0,234.0 L280.0,234.9 L281.0,233.6 L282.0,234.5 L283.0,234.7 L284.0,234.7 L285.0,234.4 L286.0,234.9 L287.0,234.7 L288.0,234.5 L289.0,233.7 L290.0,234.8 L291.0,233.8 L292.0,233.8 L293.0,234.0 L294.0,234.3 L295.0,234.1 L296.0,234.2 L297.0,234.0 L298.0,233.9 L299.0,234.6 L300.0,234.5 L301.0,233.7 L302.0,234.9 L303.0,233.8 L304.0,234.0 L305.0,234.7 L306.0,234.8 L307.0,234.9 L308.0,234.8 L309.0,234.4 L310.0,234.9 L311.0,234.7 L312.0,234.8 L313.0,235.0 L314.0,234.9 L315.0,234.3 L316.0,234.2 L317.0,234.6 L318.0,234.8 L319.0,234.6 L320.0,234.1 L321.0,233.7 L322.0,233.8 L323.0,234.8 L324.0,234.9 L325.0,233.6 L326.0,234.1 L327.0,234.5 L328.0,234.3 L329.0,233.7 L330.0,234.8 L331.0,234.5 L332.0,234.0 L333.0,234.3 L334.0,234.1 L335.0,234.5 L336.0,234.8 L337.0,234.4 L338.0,234.0 L339.0,234.1 L340.0,234.8 L341.0,234.6 L342.0,234.1 L343.0,234.9 L344.0,234.4 L345.0,235.0 L346.0,234.9 L347.0,233.7 L348.0,234.2 L349.0,233.6 L350.0,234.9 L351.0,233.9 L352.0,233.9 L353.0,234.4 L354.0,234.9 L355.0,234.5 L356.0,234.8 L357.0,234.5 L358.0,234.4 L359.0,234.2 L360.0,234.4 L361.0,233.6 L362.0,233.8 L363.0,235.0 L364.0,233.9 L365.0,234.0 L366.0,234.3 L367.0,234.6 L368.0,233.7 L369.0,234.7 L370.0,234.4 L371.0,233.7 L372.0,234.1 L373.0,234.9 L374.0,234.6 L375.0,233.8 L376.0,234.5 L377.0,233.7 L378.0,234.2 L379.0,234.1 L380.0,235.0 L381.0,234.3 L382.0,235.0 L383.0,234.3 L384.0,234.7 L385.0,233.6 L386.0,234.8 L387.0,234.4 L388.0,234.1 L389.0,234.8 L390.0,234.9 L391.0,233.8 L392.0,233.6 L393.0,234.5 L394.0,234.8 L395.0,233.8 L396.0,234.4 L397.0,233.7 L398.0,233.7 L399.0,234.3 L400.0,234.9 L401.0,234.8 L402.0,234.6 L403.0,234.6 L404.0,233.9 L405.0,234.2 L406.0,233.8 L407.0,233.9 L408.0,233.8 L409.0,234.2 L410.0,233.6 L411.0,233.8 L412.0,234.6 L413.0,234.4 L414.0,233.9 L415.0,233.9 L416.0,234.5 L417.0,233.7 L418.0,234.7 L419.0,234.7 L420.0,234.9 L421.0,233.8 L422.0,234.7 L423.0,234.4 L424.0,233.9 L425.0,234.8 L426.0,233.9 L427.0,233.8 L428.0,234.8 L429.0,235.0 L430.0,234.6 L431.0,233.8 L432.0,234.2 L433.0,234.4 L434.0,233.9 L435.0,234.8 L436.0,234.2 L437.0,234.3 L438.0,234.3 L439.0,233.6 L440.0,234.8 L441.0,234.8 L442.0,234.9 L443.0,234.4 L444.0,234.2 L445.0,234.0 L446.0,233.8 L447.0,233.9 L448.0,234.4 L449.0,234.2 L450.0,234.6 L451.0,235.0 L452.0,233.9 L453.0,234.8 L454.0,234.1 L455.0,234.2 L456.0,234.0 L457.0,234.5 L458.0,234.2 L459.0,233.8 L460.0,234.4 L461.0,233.8 L462.0,234.0 L463.0,234.2 L464.0,234.8 L465.0,234.7 L466.0,234.4 L467.0,234.3 L468.0,234.0 L469.0,234.3 L470.0,234.3 L471.0,234.3 L472.0,234.3 L473.0,233.9 L474.0,234.1 L475.0,234.1 L476.0,233.7 L477.0,233.7 L478.0,234.6 L479.0,234.1 L480.0,234.6 L481.0,234.8 L482.0,234.5 L483.0,234.3 L484.0,234.8 L485.0,234.4 L486.0,233.7 L487.0,234.7 L488.0,234.3 L489.0,234.3 L490.0,234.6 L491.0,234.5 L492.0,234.9 L493.0,234.5 L494.0,233.8 L495.0,234.5 L496.0,234.6 L497.0,233.6 L498.0,234.6 L499.0,234.5 L500.0,234.5 L501.0,234.2 L502.0,234.1 L503.0,234.4 L504.0,233.9 L505.0,234.7 L506.0,233.8 L507.0,234.4 L508.0,234.5 L509.0,234.0 L510.0,233.8 L511.0,234.9 L512.0,235.0 L513.0,234.5 L514.0,234.7 L515.0,234.2 L516.0,234.0 L517.0,234.3 L518.0,233.6 L519.0,234.4 L520.0,234.7 L521.0,234.1 L522.0,234.9 L523.0,233.8 L524.0,234.0 L525.0,234.5 L526.0,234.4 L527.0,234.8 L528.0,233.6 L529.0,234.7 L530.0,233.7 L531.0,234.7 L532.0,234.5 L533.0,233.6 L534.0,234.8 L535.0,234.0 L536.0,234.3 L537.0,234.9 L538.0,234.1 L539.0,233.7 L540.0,233.9 L541.0,234.6 L542.0,233.8 L543.0,234.0 L544.0,233.9 L545.0,234.2 L546.0,233.8 L547.0,235.0 L548.0,234.9 L549.0,233.7 L550.0,233.8 L551.0,234.4 L552.0,235.0 L553.0,234.7 L554.0,233.8 L555.0,234.8 L556.0,233.7 L557.0,234.3 L558.0,234.6 L559.0,234.2 L560.0,234.5 L561.0,234.6 L562.0,233.9 L563.0,233.8 L564.0,234.0 L565.0,233.7 L566.0,233.8 L567.0,233.7 L568.0,234.1 L569.0,234.6 L570.0,233.8 L571.0,234.2 L572.0,233.7 L573.0,233.9 L574.0,234.1 L575.0,234.9 L576.0,233.9 L577.0,233.8 L578.0,234.8 L579.0,234.1 L580.0,234.2 L581.0,234.2 L582.0,234.3 L583.0,233.6 L584.0,234.5 L585.0,234.9 L586.0,233.8 L587.0,234.8 L588.0,234.7 L589.0,234.5 L590.0,234.5 L591.0,234.2 L592.0,234.5 L593.0,234.9 L594.0,234.7 L595.0,234.4 L596.0,234.8 L597.0,233.6 L598.0,234.2 L599.0,233.6 L600.0,234.5 L601.0,234.5 L602.0,234.3 L603.0,233.8 L604.0,233.7 L605.0,234.7 L606.0,234.3 L607.0,234.3 L608.0,234.6 M612.8,194.2 L613.8,195.8 L614.8,196.7 L615.8,198.5 L616.8,199.6 L617.8,201.3 L618.8,202.6 L619.8,203.3 L620.8,205.2 L621.8,205.9 L622.8,207.6 L623.8,209.4 L624.8,210.3 L625.8,211.9 L626.8,213.3 L627.8,215.2 L628.8,215.3 L629.8,217.5 L630.8,217.7 L631.8,219.9 L632.8,219.9 L633.8,221.6 L634.8,222.5 L635.8,222.6 L636.8,224.4 L637.8,224.9 L638.8,226.2 L639.8,226.9 L640.8,228.0 L641.8,228.1 L642.8,229.1 L643.8,229.7 L644.8,230.9 L645.8,231.4 L646.8,232.1 L647.8,232.0 L648.8,233.0 L649.8,232.4 L650.8,233.3 L651.8,233.3 L652.8,234.2 L653.8,234.4 L654.8,235.0 L655.8,235.7 L656.8,235.0 L657.8,236.1 L658.8,235.8 L659.8,236.4 L660.8,237.3 L661.8,237.2 L662.8,237.2 L663.8,238.0 L664.8,238.1 L665.8,237.3 L666.8,238.0 L667.8,238.0 L668.8,237.7 L669.8,239.0 L670.8,238.4 L671.8,238.1 L672.8,238.5 L673.8,239.4 L674.8,238.7 L675.8,239.2 L676.8,239.3 L677.8,239.4 L678.8,239.8 L679.8,239.8 L680.8,239.8 L681.8,239.3 L682.8,239.9 L683.8,239.5 L684.8,240.0 L685.8,240.1 L686.8,240.5 L687.8,239.3 L688.8,240.4 L689.8,240.4 L690.8,239.7 L691.8,240.2 L692.8,240.6 L693.8,240.4 L694.8,240.7 L695.8,239.9 L696.8,240.7 L697.8,240.7 L698.8,239.9 L699.8,240.2 L700.8,240.2 L701.8,239.6 L702.8,239.7 L703.8,240.7 L704.8,240.8 L705.8,239.9 L706.8,240.4 L707.8,240.8 L708.8,239.7 L709.8,240.0 L710.8,240.8 L711.8,240.5 L712.8,241.0 L713.8,240.5 L714.8,240.7 L715.8,240.6 L716.8,240.8 L717.8,240.0 L718.8,239.9 L719.8,240.9 L720.8,240.0 L721.8,240.9 L722.8,240.0 L723.8,240.0 L724.8,239.8 L725.8,239.9 L726.8,241.1 L727.8,240.1 L728.8,241.1 L729.8,239.8 L730.8,240.2 L731.8,240.6 L732.8,241.0 L733.8,240.0 L734.8,240.3 L735.8,240.3 L736.8,240.1 L737.8,239.8 L738.8,240.2 L739.8,240.6 L740.8,240.4 L741.8,240.4 L742.8,240.0 L743.8,240.1 L744.8,240.4 L745.8,239.9 L746.8,240.1 L747.8,240.9 L748.8,241.0 L749.8,241.0 L750.8,240.4 L751.8,241.0 L752.8,240.5 L753.8,239.8 L754.8,240.4 L755.8,241.1 L756.8,240.2 L757.8,240.2 L758.8,239.8 L759.8,240.2 L760.8,239.9 L761.8,241.1 L762.8,240.4 L763.8,240.1 L764.8,240.2 L765.8,240.5 L766.8,239.9 L767.8,240.8 L768.8,240.1 L769.8,240.3 L770.8,241.0 L771.8,240.3 L772.8,240.2 L773.8,240.8 L774.8,241.0 L775.8,240.7 L776.8,240.4 L777.8,241.0 L778.8,240.0 L779.8,241.0 L780.8,240.6 L781.8,239.9 L782.8,240.0 L783.8,240.0 L784.8,240.1 L785.8,240.7 L786.8,240.7 L787.8,240.5 L788.8,240.3 L789.8,240.0 L790.8,239.8 L791.8,240.4 L792.8,240.6 L793.8,240.8 L794.8,240.0 L795.8,239.9 L796.8,240.1 L797.8,239.8 L798.8,240.0 L799.8,240.5 L800.8,240.6 L801.8,240.1 L802.8,241.1 L803.8,239.8 L804.8,240.1 L805.8,241.0 L806.8,240.7 L807.8,240.4 L808.8,240.2 L809.8,240.7 L810.8,240.4 L811.8,240.0 L812.8,240.5 L813.8,241.1 L814.8,241.0 L815.8,240.0 L816.8,240.0 L817.8,239.9 L818.8,240.5 L819.8,240.7 L820.8,241.0 L821.8,240.6 L822.8,240.2 L823.8,241.1 L824.8,239.7 L825.8,240.5 L826.8,240.7 L827.8,240.3 L828.8,240.9 L829.8,240.9 L830.8,240.4 L831.8,240.3 L832.8,240.9 L833.8,239.7 L834.8,239.7 L835.8,239.8 L836.8,240.3 L837.8,240.4 L838.8,240.2 L839.8,240.2 L840.8,240.2 L841.8,239.9 L842.8,241.0 L843.8,240.2 L844.8,240.5 L845.8,239.9 L846.8,239.9 L847.8,239.9 L848.8,240.8 L849.8,239.9 L850.8,240.1 L851.8,240.5 L852.8,239.8 L853.8,240.4 L854.8,240.3 L855.8,240.8 L856.8,240.7 L857.8,240.0 L858.8,239.9 L859.8,241.0 L860.8,239.7 L861.8,241.0 L862.8,240.2 L863.8,240.8 L864.8,240.9 L865.8,240.5 L866.8,240.3 L867.8,240.4 L868.8,239.8 L869.8,241.1 L870.8,241.1 L871.8,239.8 L872.8,241.1 L873.8,240.0 L874.8,239.8 L875.8,241.0 L876.8,240.0 L877.8,240.1 L878.8,240.8 L879.8,240.8 L880.8,240.2 L881.8,239.8 L882.8,240.8 L883.8,239.8 L884.8,240.8 L885.8,240.3 L886.8,240.7 L887.8,239.9 L888.8,240.3 L889.8,241.0 L890.8,239.8 L891.8,240.4 L892.8,241.0 L893.8,240.5 L894.8,240.4 L895.8,241.1 L896.8,240.7 L897.8,240.7 L898.8,240.8 L899.8,240.8 L900.8,240.1 L901.8,239.8 L902.8,239.8 L903.8,240.4 L904.8,240.7 L905.8,240.0 L906.8,240.3 L907.8,240.0 L908.8,240.0 L909.8,240.1 L910.8,240.3 L911.8,240.0 L912.8,240.4 L913.8,240.7 L914.8,240.6 L915.8,239.8 L916.8,240.3 L917.8,240.5 L918.8,240.1 L919.8,240.2 L920.8,240.0 L921.8,240.6 L922.8,240.2 L923.8,239.8 L924.8,240.3 L925.8,240.9 L926.8,239.8 L927.8,239.8 L928.8,239.8 L929.8,240.0 L930.8,240.1 L931.8,240.6 L932.8,240.2 L933.8,240.7 L934.8,240.1 L935.8,239.8 L936.8,241.0 L937.8,240.5 L938.8,240.3 L939.8,239.8 L940.8,240.5 L941.8,240.9 L942.8,239.9 L943.8,239.8 L944.8,240.3 L945.8,240.6 L946.8,239.7 L947.8,240.0 L948.8,241.1 L949.8,240.7 L950.8,240.8 L951.8,240.8 L952.8,239.8 L953.8,240.8 L954.8,240.0 L955.8,240.0 L956.8,241.0 L957.8,240.1 L958.8,239.9 L959.8,240.9 L960.8,240.3 L961.8,240.9 L962.8,239.9 L963.8,240.3 L964.8,240.0 L965.8,239.9 L966.8,240.5 L967.8,240.3 L968.8,240.0 L969.8,241.0 L970.8,240.6 L971.8,240.1 L972.8,239.9 L973.8,240.8 L974.8,239.8 L975.8,240.0 L976.8,239.9 L977.8,240.9 L978.8,239.8 L979.8,240.1 L980.8,240.5 L981.8,240.9 L982.8,240.7 L983.8,240.5 L984.8,241.0 L985.8,240.3 L986.8,241.0 L987.8,240.8 L988.8,240.9 L989.8,240.4 L990.8,240.1 L991.8,240.0 L992.8,240.7 L993.8,239.9 L994.8,240.2 L995.8,240.5 L996.8,241.1 L997.8,240.6 L998.8,240.6 L999.8,239.9 L1000.8,239.7 L1001.8,240.3 L1002.8,240.5 L1003.8,239.8 L1004.8,240.1 L1005.8,239.9 L1006.8,240.6 L1007.8,240.3 L1008.8,240.2 L1009.8,240.4 L1010.8,240.7" stroke="#ea620f" stroke-width="3.2" fill="none" stroke-linejoin="round"/>
<g opacity="0.16" shape-rendering="crispEdges" fill="none"><path d="M212.5,52 V671 M312.5,52 V671 M412.5,52 V671 M512.5,52 V671 M611.5,52 V671 M711.5,52 V671 M811.5,52 V671 M911.5,52 V671 M12,114.5 H1011 M12,176.5 H1011 M12,300.5 H1011 M12,362.5 H1011 M12,423.5 H1011 M12,485.5 H1011 M12,547.5 H1011 M12,609.5 H1011" stroke="#909090" stroke-width="1" stroke-dasharray="3 3"/><path d="M112.5,53 V671" stroke="#c6c6c6" stroke-width="1"/><path d="M109,83.5 h7 M13,83.5 h5 M1006,83.5 h5 M13,114.5 h9 M1002,114.5 h9 M109,145.5 h7 M13,145.5 h5 M1006,145.5 h5 M13,176.5 h9 M1002,176.5 h9 M109,207.5 h7 M13,207.5 h5 M1006,207.5 h5 M13,238.5 h9 M1002,238.5 h9 M109,269.5 h7 M13,269.5 h5 M1006,269.5 h5 M13,300.5 h9 M1002,300.5 h9 M109,331.5 h7 M13,331.5 h5 M1006,331.5 h5 M13,362.5 h9 M1002,362.5 h9 M109,392.5 h7 M13,392.5 h5 M1006,392.5 h5 M13,423.5 h9 M1002,423.5 h9 M109,454.5 h7 M13,454.5 h5 M1006,454.5 h5 M13,485.5 h9 M1002,485.5 h9 M109,516.5 h7 M13,516.5 h5 M1006,516.5 h5 M13,547.5 h9 M1002,547.5 h9 M109,578.5 h7 M13,578.5 h5 M1006,578.5 h5 M13,609.5 h9 M1002,609.5 h9 M109,640.5 h7 M13,640.5 h5 M1006,640.5 h5 M62.5,666 v5 M62.5,53 v5 M112.5,53 v9 M112.5,662 v9 M162.5,666 v5 M162.5,53 v5 M212.5,53 v9 M212.5,662 v9 M262.5,666 v5 M262.5,53 v5 M312.5,53 v9 M312.5,662 v9 M362.5,666 v5 M362.5,53 v5 M412.5,53 v9 M412.5,662 v9 M462.5,666 v5 M462.5,53 v5 M512.5,53 v9 M512.5,662 v9 M561.5,666 v5 M561.5,53 v5 M611.5,53 v9 M611.5,662 v9 M661.5,666 v5 M661.5,53 v5 M711.5,53 v9 M711.5,662 v9 M761.5,666 v5 M761.5,53 v5 M811.5,53 v9 M811.5,662 v9 M861.5,666 v5 M861.5,53 v5 M911.5,53 v9 M911.5,662 v9 M961.5,666 v5 M961.5,53 v5" stroke="#c8c8c8" stroke-width="1"/><path d="M111,58.5 h3 M13,58.5 h1 M1010,58.5 h1 M111,64.5 h3 M13,64.5 h1 M1010,64.5 h1 M111,71.5 h3 M13,71.5 h1 M1010,71.5 h1 M111,77.5 h3 M13,77.5 h1 M1010,77.5 h1 M111,89.5 h3 M13,89.5 h1 M1010,89.5 h1 M111,95.5 h3 M13,95.5 h1 M1010,95.5 h1 M111,102.5 h3 M13,102.5 h1 M1010,102.5 h1 M111,108.5 h3 M13,108.5 h1 M1010,108.5 h1 M111,120.5 h3 M13,120.5 h1 M1010,120.5 h1 M111,126.5 h3 M13,126.5 h1 M1010,126.5 h1 M111,132.5 h3 M13,132.5 h1 M1010,132.5 h1 M111,139.5 h3 M13,139.5 h1 M1010,139.5 h1 M111,151.5 h3 M13,151.5 h1 M1010,151.5 h1 M111,157.5 h3 M13,157.5 h1 M1010,157.5 h1 M111,163.5 h3 M13,163.5 h1 M1010,163.5 h1 M111,170.5 h3 M13,170.5 h1 M1010,170.5 h1 M111,182.5 h3 M13,182.5 h1 M1010,182.5 h1 M111,188.5 h3 M13,188.5 h1 M1010,188.5 h1 M111,194.5 h3 M13,194.5 h1 M1010,194.5 h1 M111,201.5 h3 M13,201.5 h1 M1010,201.5 h1 M111,213.5 h3 M13,213.5 h1 M1010,213.5 h1 M111,219.5 h3 M13,219.5 h1 M1010,219.5 h1 M111,225.5 h3 M13,225.5 h1 M1010,225.5 h1 M111,232.5 h3 M13,232.5 h1 M1010,232.5 h1 M111,244.5 h3 M13,244.5 h1 M1010,244.5 h1 M111,250.5 h3 M13,250.5 h1 M1010,250.5 h1 M111,256.5 h3 M13,256.5 h1 M1010,256.5 h1 M111,262.5 h3 M13,262.5 h1 M1010,262.5 h1 M111,275.5 h3 M13,275.5 h1 M1010,275.5 h1 M111,281.5 h3 M13,281.5 h1 M1010,281.5 h1 M111,287.5 h3 M13,287.5 h1 M1010,287.5 h1 M111,293.5 h3 M13,293.5 h1 M1010,293.5 h1 M111,306.5 h3 M13,306.5 h1 M1010,306.5 h1 M111,312.5 h3 M13,312.5 h1 M1010,312.5 h1 M111,318.5 h3 M13,318.5 h1 M1010,318.5 h1 M111,324.5 h3 M13,324.5 h1 M1010,324.5 h1 M111,337.5 h3 M13,337.5 h1 M1010,337.5 h1 M111,343.5 h3 M13,343.5 h1 M1010,343.5 h1 M111,349.5 h3 M13,349.5 h1 M1010,349.5 h1 M111,355.5 h3 M13,355.5 h1 M1010,355.5 h1 M111,368.5 h3 M13,368.5 h1 M1010,368.5 h1 M111,374.5 h3 M13,374.5 h1 M1010,374.5 h1 M111,380.5 h3 M13,380.5 h1 M1010,380.5 h1 M111,386.5 h3 M13,386.5 h1 M1010,386.5 h1 M111,399.5 h3 M13,399.5 h1 M1010,399.5 h1 M111,405.5 h3 M13,405.5 h1 M1010,405.5 h1 M111,411.5 h3 M13,411.5 h1 M1010,411.5 h1 M111,417.5 h3 M13,417.5 h1 M1010,417.5 h1 M111,430.5 h3 M13,430.5 h1 M1010,430.5 h1 M111,436.5 h3 M13,436.5 h1 M1010,436.5 h1 M111,442.5 h3 M13,442.5 h1 M1010,442.5 h1 M111,448.5 h3 M13,448.5 h1 M1010,448.5 h1 M111,461.5 h3 M13,461.5 h1 M1010,461.5 h1 M111,467.5 h3 M13,467.5 h1 M1010,467.5 h1 M111,473.5 h3 M13,473.5 h1 M1010,473.5 h1 M111,479.5 h3 M13,479.5 h1 M1010,479.5 h1 M111,491.5 h3 M13,491.5 h1 M1010,491.5 h1 M111,498.5 h3 M13,498.5 h1 M1010,498.5 h1 M111,504.5 h3 M13,504.5 h1 M1010,504.5 h1 M111,510.5 h3 M13,510.5 h1 M1010,510.5 h1 M111,522.5 h3 M13,522.5 h1 M1010,522.5 h1 M111,529.5 h3 M13,529.5 h1 M1010,529.5 h1 M111,535.5 h3 M13,535.5 h1 M1010,535.5 h1 M111,541.5 h3 M13,541.5 h1 M1010,541.5 h1 M111,553.5 h3 M13,553.5 h1 M1010,553.5 h1 M111,560.5 h3 M13,560.5 h1 M1010,560.5 h1 M111,566.5 h3 M13,566.5 h1 M1010,566.5 h1 M111,572.5 h3 M13,572.5 h1 M1010,572.5 h1 M111,584.5 h3 M13,584.5 h1 M1010,584.5 h1 M111,591.5 h3 M13,591.5 h1 M1010,591.5 h1 M111,597.5 h3 M13,597.5 h1 M1010,597.5 h1 M111,603.5 h3 M13,603.5 h1 M1010,603.5 h1 M111,615.5 h3 M13,615.5 h1 M1010,615.5 h1 M111,621.5 h3 M13,621.5 h1 M1010,621.5 h1 M111,628.5 h3 M13,628.5 h1 M1010,628.5 h1 M111,634.5 h3 M13,634.5 h1 M1010,634.5 h1 M111,646.5 h3 M13,646.5 h1 M1010,646.5 h1 M111,652.5 h3 M13,652.5 h1 M1010,652.5 h1 M111,659.5 h3 M13,659.5 h1 M1010,659.5 h1 M111,665.5 h3 M13,665.5 h1 M1010,665.5 h1 M22.5,670 v1 M22.5,53 v1 M32.5,670 v1 M32.5,53 v1 M42.5,670 v1 M42.5,53 v1 M52.5,670 v1 M52.5,53 v1 M72.5,670 v1 M72.5,53 v1 M82.5,670 v1 M82.5,53 v1 M92.5,670 v1 M92.5,53 v1 M102.5,670 v1 M102.5,53 v1 M122.5,670 v1 M122.5,53 v1 M132.5,670 v1 M132.5,53 v1 M142.5,670 v1 M142.5,53 v1 M152.5,670 v1 M152.5,53 v1 M172.5,670 v1 M172.5,53 v1 M182.5,670 v1 M182.5,53 v1 M192.5,670 v1 M192.5,53 v1 M202.5,670 v1 M202.5,53 v1 M222.5,670 v1 M222.5,53 v1 M232.5,670 v1 M232.5,53 v1 M242.5,670 v1 M242.5,53 v1 M252.5,670 v1 M252.5,53 v1 M272.5,670 v1 M272.5,53 v1 M282.5,670 v1 M282.5,53 v1 M292.5,670 v1 M292.5,53 v1 M302.5,670 v1 M302.5,53 v1 M322.5,670 v1 M322.5,53 v1 M332.5,670 v1 M332.5,53 v1 M342.5,670 v1 M342.5,53 v1 M352.5,670 v1 M352.5,53 v1 M372.5,670 v1 M372.5,53 v1 M382.5,670 v1 M382.5,53 v1 M392.5,670 v1 M392.5,53 v1 M402.5,670 v1 M402.5,53 v1 M422.5,670 v1 M422.5,53 v1 M432.5,670 v1 M432.5,53 v1 M442.5,670 v1 M442.5,53 v1 M452.5,670 v1 M452.5,53 v1 M472.5,670 v1 M472.5,53 v1 M482.5,670 v1 M482.5,53 v1 M492.5,670 v1 M492.5,53 v1 M502.5,670 v1 M502.5,53 v1 M521.5,670 v1 M521.5,53 v1 M531.5,670 v1 M531.5,53 v1 M541.5,670 v1 M541.5,53 v1 M551.5,670 v1 M551.5,53 v1 M571.5,670 v1 M571.5,53 v1 M581.5,670 v1 M581.5,53 v1 M591.5,670 v1 M591.5,53 v1 M601.5,670 v1 M601.5,53 v1 M621.5,670 v1 M621.5,53 v1 M631.5,670 v1 M631.5,53 v1 M641.5,670 v1 M641.5,53 v1 M651.5,670 v1 M651.5,53 v1 M671.5,670 v1 M671.5,53 v1 M681.5,670 v1 M681.5,53 v1 M691.5,670 v1 M691.5,53 v1 M701.5,670 v1 M701.5,53 v1 M721.5,670 v1 M721.5,53 v1 M731.5,670 v1 M731.5,53 v1 M741.5,670 v1 M741.5,53 v1 M751.5,670 v1 M751.5,53 v1 M771.5,670 v1 M771.5,53 v1 M781.5,670 v1 M781.5,53 v1 M791.5,670 v1 M791.5,53 v1 M801.5,670 v1 M801.5,53 v1 M821.5,670 v1 M821.5,53 v1 M831.5,670 v1 M831.5,53 v1 M841.5,670 v1 M841.5,53 v1 M851.5,670 v1 M851.5,53 v1 M871.5,670 v1 M871.5,53 v1 M881.5,670 v1 M881.5,53 v1 M891.5,670 v1 M891.5,53 v1 M901.5,670 v1 M901.5,53 v1 M921.5,670 v1 M921.5,53 v1 M931.5,670 v1 M931.5,53 v1 M941.5,670 v1 M941.5,53 v1 M951.5,670 v1 M951.5,53 v1 M971.5,670 v1 M971.5,53 v1 M981.5,670 v1 M981.5,53 v1 M991.5,670 v1 M991.5,53 v1 M1001.5,670 v1 M1001.5,53 v1" stroke="#808080" stroke-width="1"/></g>
<g style="mix-blend-mode:screen" shape-rendering="crispEdges" fill="none"><path d="M13,238.5 H1011" stroke="#c2c2c2" stroke-width="1"/><path d="M22.5,237 v3 M32.5,237 v3 M42.5,237 v3 M52.5,237 v3 M62.5,235 v7 M72.5,237 v3 M82.5,237 v3 M92.5,237 v3 M102.5,237 v3 M122.5,237 v3 M132.5,237 v3 M142.5,237 v3 M152.5,237 v3 M162.5,235 v7 M172.5,237 v3 M182.5,237 v3 M192.5,237 v3 M202.5,237 v3 M222.5,237 v3 M232.5,237 v3 M242.5,237 v3 M252.5,237 v3 M262.5,235 v7 M272.5,237 v3 M282.5,237 v3 M292.5,237 v3 M302.5,237 v3 M322.5,237 v3 M332.5,237 v3 M342.5,237 v3 M352.5,237 v3 M362.5,235 v7 M372.5,237 v3 M382.5,237 v3 M392.5,237 v3 M402.5,237 v3 M422.5,237 v3 M432.5,237 v3 M442.5,237 v3 M452.5,237 v3 M462.5,235 v7 M472.5,237 v3 M482.5,237 v3 M492.5,237 v3 M502.5,237 v3 M521.5,237 v3 M531.5,237 v3 M541.5,237 v3 M551.5,237 v3 M561.5,235 v7 M571.5,237 v3 M581.5,237 v3 M591.5,237 v3 M601.5,237 v3 M621.5,237 v3 M631.5,237 v3 M641.5,237 v3 M651.5,237 v3 M661.5,235 v7 M671.5,237 v3 M681.5,237 v3 M691.5,237 v3 M701.5,237 v3 M721.5,237 v3 M731.5,237 v3 M741.5,237 v3 M751.5,237 v3 M761.5,235 v7 M771.5,237 v3 M781.5,237 v3 M791.5,237 v3 M801.5,237 v3 M821.5,237 v3 M831.5,237 v3 M841.5,237 v3 M851.5,237 v3 M861.5,235 v7 M871.5,237 v3 M881.5,237 v3 M891.5,237 v3 M901.5,237 v3 M921.5,237 v3 M931.5,237 v3 M941.5,237 v3 M951.5,237 v3 M961.5,235 v7 M971.5,237 v3 M981.5,237 v3 M991.5,237 v3 M1001.5,237 v3" stroke="#bcbcbc" stroke-width="1"/></g>
<rect x="12.5" y="52.5" width="999" height="619" fill="none" stroke="#f2f2f2" stroke-width="1" shape-rendering="crispEdges"/>
</svg>

<div class="lab" style="left:22px;top:53px;width:31px">1.2 V</div>
<div class="lab" style="left:22px;top:106px;width:42px">800 mV</div>
<div class="lab" style="left:22px;top:168px;width:42px">400 mV</div>
<div class="lab" style="left:22px;top:292px;width:46px">-400 mV</div>
<div class="lab" style="left:22px;top:354px;width:46px">-800 mV</div>
<div class="lab" style="left:22px;top:415px;width:35px">-1.2 V</div>
<div class="lab" style="left:22px;top:477px;width:35px">-1.6 V</div>
<div class="lab" style="left:22px;top:539px;width:26px;background:linear-gradient(#2b2b2b 0,#2b2b2b 53%,rgba(30,34,60,.5) 56%,rgba(30,34,60,.5) 100%)">-2 V</div>
<div class="lab" style="left:22px;top:601px;width:35px;background:linear-gradient(rgba(30,34,60,.5) 0,rgba(30,34,60,.5) 68%,#2b2b2b 72%,#2b2b2b 100%)">-2.4 V</div>
<div class="lab" style="left:22px;top:655px;width:35px">-2.8 V</div>
<div class="lab" style="left:104px;top:648.5px;width:17px">0 s</div>
<div class="lab" style="left:195px;top:648.5px;width:35px">400 µs</div>
<div class="lab" style="left:295px;top:648.5px;width:35px">800 µs</div>
<div class="lab" style="left:396px;top:648.5px;width:33px">1.2 ms</div>
<div class="lab" style="left:496px;top:648.5px;width:33px">1.6 ms</div>
<div class="lab" style="left:599px;top:648.5px;width:25px">2 ms</div>
<div class="lab" style="left:695px;top:648.5px;width:33px">2.4 ms</div>
<div class="lab" style="left:795px;top:648.5px;width:33px">2.8 ms</div>
<div class="lab" style="left:895px;top:648.5px;width:33px">3.2 ms</div>
<div class="lab" style="left:978px;top:648.5px;width:33px">3.6 ms</div>
<svg class="abs" style="left:0;top:0" width="1024" height="768" viewBox="0 0 1024 768">
<path d="M103.500,53 H121.500 L112.500,67 Z" fill="#35d8e8"/>
<rect id="zeroV" x="22" y="230" width="25" height="16" fill="#2b2b2b"/><text x="25" y="242" font-family="Liberation Sans" font-size="11" fill="#ee6a30">0 V</text><path d="M22,240 H47" stroke="#b04208" stroke-width="5.600" opacity=".85"/><path d="M22,240 H47" stroke="#ea620f" stroke-width="3.200"/><path d="M22,238.500 H47" stroke="#e8c8b8" stroke-width="1" shape-rendering="crispEdges"/>
<path d="M13.500,231 H31 L37,238.500 L31,246 H13.500 Z" fill="rgba(60,20,0,.35)" stroke="#f06a2a" stroke-width="1.2"/>
<text x="17" y="242.500" font-family="Liberation Sans" font-size="9.500" fill="#f06a2a">C3</text>
<path d="M13.500,603.500 H34.300 L41.300,610.500 L34.300,617.500 H13.500 Z" fill="rgba(22,34,90,.5)" stroke="#5580ea" stroke-width="1.2"/>
<text x="19.500" y="614.500" font-family="Liberation Sans" font-size="9.500" fill="#7a9cf0">C4</text>
<path d="M1010.500,499 H998.500 L992,505.500 L998.500,512 H1010.500" fill="none" stroke="#35a898" stroke-width="1.3"/>
<text x="998.500" y="510" font-family="Liberation Sans" font-size="10" fill="#35a898">TA</text>
<text x="81.500" y="165" font-family="Liberation Sans" font-size="16" fill="#ee7038" textLength="44.500" lengthAdjust="spacingAndGlyphs">VOUT</text>
<rect x="77" y="502" width="43" height="16" fill="rgba(20,20,30,.35)"/><text x="78.800" y="516" font-family="Liberation Sans" font-size="16" fill="#7088ea" textLength="40" lengthAdjust="spacingAndGlyphs">IOUT</text>
<path id="axis0" d="M112.500,649 V664" stroke="#b8b8b8" stroke-width="1" shape-rendering="crispEdges"/>
</svg>

<div class="abs" style="left:917px;top:201px;width:107px;height:524px;background:rgba(58,58,58,.585)"></div>
<div class="abs" style="left:914px;top:200px;width:3px;height:525px;background:#9a9a9a"></div>
<div class="abs" id="hpanel" style="left:867px;top:49px;width:170px;height:152px;background:#4a4a4a;border-left:3px solid #e8e8e8;border-bottom:3px solid #e8e8e8;border-top:1px solid #777;border-bottom-left-radius:8px;overflow:hidden;font-size:15.5px;line-height:18px;white-space:nowrap">
<div class="abs" style="left:0;top:0;width:170px;height:18px;background:#0c0c0c"></div>
<div class="abs" style="left:6px;top:0.5px;font-size:16.5px;letter-spacing:.65px;color:#fff">Horizontal</div>
<div class="abs" style="left:1.300px;top:19px;color:#f0f0f0;letter-spacing:.3px">100 ns</div>
<div class="abs" style="left:86px;top:19px;width:65px;height:18px;overflow:hidden;color:#f0f0f0;letter-spacing:.3px">10 MSa/s</div>
<div class="abs" style="left:1.300px;top:37px;color:#8c8c8c;letter-spacing:.3px">40 kSa</div>
<div class="abs" style="left:126px;top:37px;color:#fff;font-size:17px;letter-spacing:2.6px">RT</div>
<div class="abs" style="left:1.300px;top:55px;color:#f0f0f0;letter-spacing:.3px">400 µs/div</div>
<div class="abs" style="left:1.300px;top:72px;color:#f0f0f0;letter-spacing:.3px">0 s</div>
<div class="abs" style="left:0;top:92px;width:170px;height:18px;background:#0c0c0c"></div>
<div class="abs" style="left:8px;top:92px;font-size:16.5px;letter-spacing:.5px;color:#fff">Trigger</div>
<div class="abs" style="left:115px;top:92px;font-size:15.5px;color:#e8b24a;letter-spacing:.3px">Auto</div>
<div class="abs" style="left:1.300px;top:111px;color:#f0f0f0;letter-spacing:.3px">Edge</div>
<svg class="abs" style="left:46px;top:113px" width="20" height="16" viewBox="0 0 20 16"><path d="M1,14.500 H9.500 V1.500 H18" stroke="#f0f0f0" stroke-width="1.5" fill="none"/><path d="M6,8 L9.500,3.500 L13,8" stroke="#f0f0f0" stroke-width="1.5" fill="none"/></svg>
<div class="abs" style="left:69px;top:111px;color:#4d6cea;letter-spacing:.3px">Ch4</div>
<div class="abs" style="left:1.300px;top:129px;color:#f0f0f0;letter-spacing:.3px">6.8387 A</div>
</div>

<div class="abs" style="left:892px;top:224px;width:119px;height:94px;border:2px solid #f0701e;border-radius:6px;background:#1c0e06;overflow:hidden;font-size:15.5px;line-height:17px;white-space:nowrap;color:#e2e2e2">
<div class="abs" style="left:0;top:0;width:115px;height:18px;background:#ff6c12"></div>
<div class="abs" style="left:26px;top:-1px;font-size:16px;color:#1a0a00;letter-spacing:.9px;text-shadow:.4px 0 #1a0a00">Ch3</div>
<div class="abs" style="left:89px;top:1px;width:26px;height:15px;border-radius:4.500px;border:1px solid #27489c;background:linear-gradient(#86b2f8,#2f66dc 50%,#1c46b0)"><div class="abs" style="left:6px;top:6px;width:12px;height:2.500px;background:#fff"></div></div>
<div class="abs" style="left:3.300px;top:20.500px;letter-spacing:.25px">400 mV/div</div>
<div class="abs" style="left:3.300px;top:37.500px;letter-spacing:.25px">2 div</div>
<div class="abs" style="left:3.300px;top:54.700px;letter-spacing:.25px;color:#857b73">0 V</div>
<div class="abs" style="left:3.300px;top:71.500px;letter-spacing:.25px">AC</div>
</div>

<div class="abs" style="left:892px;top:341px;width:119px;height:92px;border-radius:6px;background:#050505;overflow:hidden;font-size:15.5px;line-height:17px;white-space:nowrap;color:#e2e2e2">
<div class="abs" style="left:0;top:0;width:119px;height:92px;border:2px solid #858585;border-radius:6px"></div>
<div class="abs" style="left:0;top:0;width:119px;height:18px;background:#2f5ff2;border-radius:6px 6px 0 0"></div>
<div class="abs" style="left:27px;top:1px;font-size:16px;color:#06144e;letter-spacing:.9px;text-shadow:.4px 0 #06144e">Ch4</div>
<div class="abs" style="left:91px;top:1.500px;width:26px;height:15px;border-radius:4.500px;border:1px solid #27489c;background:linear-gradient(#86b2f8,#2f66dc 50%,#1c46b0)"><div class="abs" style="left:6px;top:6.500px;width:12px;height:2.500px;background:#fff"></div></div>
<div class="abs" style="left:5.300px;top:22px;letter-spacing:.25px">4 A/div</div>
<div class="abs" style="left:5.300px;top:38.500px;letter-spacing:.25px">-4.02 div</div>
<div class="abs" style="left:5.300px;top:55.500px;letter-spacing:.25px;color:#808080">0 A</div>
<div class="abs" style="left:5.300px;top:72.700px;letter-spacing:.25px">DC 1MΩ</div>
</div>

<div class="abs" style="left:499px;top:676px;width:25px;height:4px;background:#aaa"></div>
<div class="abs" id="meas" style="left:12px;top:684px;width:1000px;height:39px;background:#3b4246;border:1px solid #9a9a9a;border-bottom-color:#e4e4e4;font-weight:bold;font-size:11.5px;white-space:nowrap">
<div class="abs" style="left:1.5px;top:3px;line-height:14px;letter-spacing:.15px;color:#fff">Meas Group 1</div>
<div class="abs" style="left:109px;top:3px;width:13px;height:13px;background:#f2e60a;color:#333;font-size:6px;line-height:13px;text-align:center;font-weight:normal">C1</div>
<div class="abs" style="left:1px;top:19px;width:106px;height:16px;background:#2f3539"></div>
<div class="abs" style="left:3px;top:21px;line-height:14px;letter-spacing:.15px;color:#fff">High</div>
<div class="abs" style="left:107px;top:19px;width:104px;height:16px;background:#c6c6c6;color:#000;text-align:right;padding-right:4px;line-height:17px;font-size:11.5px;letter-spacing:.45px">636.21 mV</div>
</div>
<div class="abs" style="left:917px;top:684px;width:95px;height:39px;background:rgba(58,58,58,.585)"></div>
<div class="abs" style="left:914px;top:672px;width:3px;height:53px;background:#9a9a9a"></div>
<div id="menubar">
<div class="abs" style="left:0;top:0;width:44px;height:43px;background:linear-gradient(#465664,#3a4856)"></div>
<svg class="abs" style="left:3px;top:8px" width="38" height="26" viewBox="0 0 38 26"><g fill="#f4f4f4"><rect x="0.500" y="0.500" width="11" height="11" rx="2.500"/><rect x="13.500" y="0.500" width="11" height="11" rx="2.500"/><rect x="26.500" y="0.500" width="11" height="11" rx="2.500"/><rect x="0.500" y="13.500" width="11" height="11" rx="2.500"/><rect x="13.500" y="13.500" width="11" height="11" rx="2.500"/><rect x="26.500" y="13.500" width="11" height="11" rx="2.500"/></g></svg>
<div class="ms" style="left:48px"></div><div class="mi" style="left:53px">File</div>
<div class="ms" style="left:96px"></div><div class="mi" style="left:100px">Horizontal</div>
<div class="ms" style="left:208px"></div><div class="mi" style="left:212px">Trigger</div>
<div class="ms" style="left:289px"></div><div class="mi" style="left:293px">Vertical</div>
<div class="ms" style="left:374px"></div><div class="mi" style="left:378px">Math</div>
<div class="ms" style="left:434px"></div><div class="mi" style="left:438px">Cursor</div>
<div class="ms" style="left:511px"></div><div class="mi" style="left:515px">Meas</div>
<div class="ms" style="left:573px"></div><div class="mi" style="left:577px">Masks</div>
<div class="ms" style="left:645px"></div><div class="mi" style="left:649px">Analysis</div>
<div class="ms" style="left:738px"></div><div class="mi" style="left:742px">Display</div>
</div>

</body></html>
